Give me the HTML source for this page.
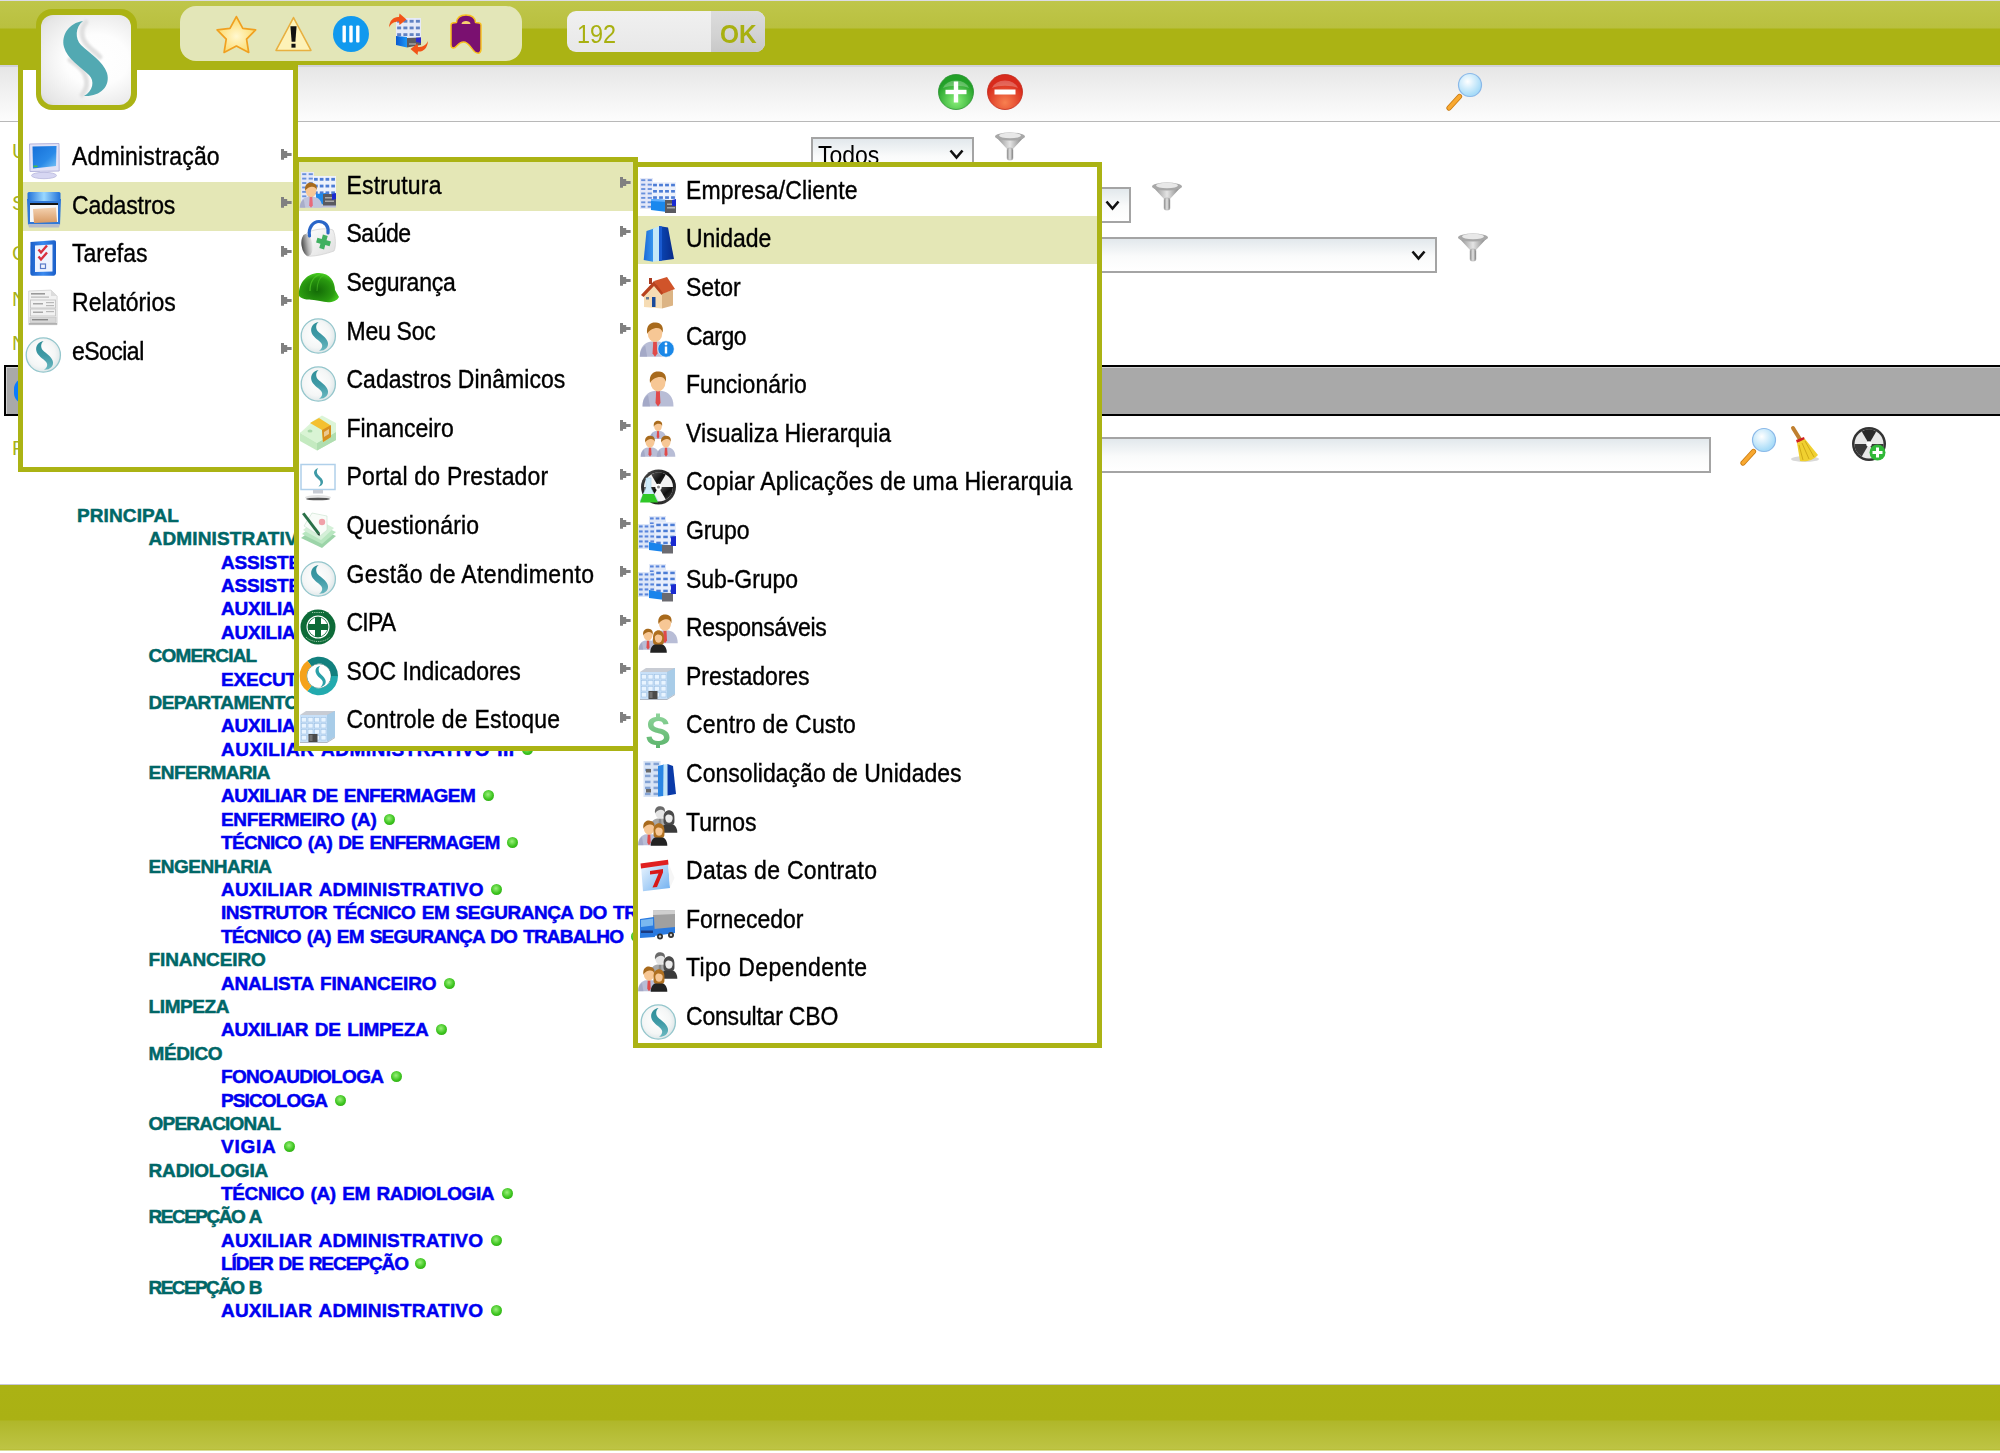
<!DOCTYPE html>
<html><head><meta charset="utf-8">
<style>
html,body{margin:0;padding:0}
body{width:2000px;height:1453px;position:relative;overflow:hidden;background:#fff;font-family:"Liberation Sans",sans-serif}
.a{position:absolute}
#hdr{left:0;top:0;width:2000px;height:65px;background:linear-gradient(#dcdce6 0,#dcdce6 1px,#bfc64a 1px,#b9c03f 28px,#abb314 29px,#abb314 65px)}
#sub{left:0;top:65px;width:2000px;height:55.5px;background:linear-gradient(#d2d2da 0,#d2d2da 1.5px,#e6e6e6 2.5px,#efefef 22px,#fcfcfc 54px);border-bottom:1.5px solid #b8b8b8}
#ftr{left:0;top:1384px;width:2000px;height:69px;background:linear-gradient(#c8c8d8 0,#c8c8d8 1px,#abb214 1px,#aab114 36px,#b0b72a 37px,#bec444 65px,#b4bb2e 66px,#fff 67px)}
.lbl{font-size:20px;line-height:20px;color:#a9b118;left:12px}
.sel{border:2px solid #a4a4a4;background:linear-gradient(#e2e8ec,#fafbfb 55%,#fff);box-sizing:border-box}
#bar{left:4px;top:365px;width:1996px;height:51px;box-sizing:border-box;border:2px solid #000;border-right:none;background:#a9a9a9;box-shadow:inset 1px 1px 0 #d0d0d0}
.menu{position:absolute;border:5px solid #abb314;background:#fff;box-sizing:border-box}
.mi{position:absolute;left:0;right:0;height:48.6px;font-size:23px;line-height:48.6px;color:#000;white-space:nowrap}
.mi.hl{background:#e4e7b6}
.mi .t{position:absolute;top:-0.3px;-webkit-text-stroke:0.35px #000;display:inline-block;transform:scaleY(1.1);transform-origin:0 32px}
.arr{position:absolute;width:11px;height:11px;top:15.4px}
.tr{position:absolute;font-size:19px;line-height:23.39px;font-weight:bold;white-space:nowrap;-webkit-text-stroke:0.5px currentColor;word-spacing:1.6px}
.dot{display:inline-block;width:11px;height:11px;border-radius:50%;background:radial-gradient(circle at 45% 40%,#9af07a,#3cc41e 55%,#2a9a10);margin-left:7.5px;vertical-align:1px;letter-spacing:0}

</style></head><body>
<div id="hdr" class="a"></div>
<div id="sub" class="a"></div>

<div class="a lbl" style="top:141px">U</div>
<div class="a lbl" style="top:193px">S</div>
<div class="a lbl" style="top:242.5px">C</div>
<div class="a lbl" style="top:289px">N</div>
<div class="a lbl" style="top:333px">N</div>
<div class="a lbl" style="top:438px">F</div>

<div class="a sel" style="left:811px;top:136.5px;width:163px;height:36px"><span class="a" style="left:5px;top:4.5px;font-size:23px;line-height:23px;transform:scaleY(1.1);transform-origin:0 0">Todos</span>
<svg class="a" style="left:136px;top:10.5px;width:15px;height:11px" viewBox="0 0 15 11"><path d="M1.5 1.5L7.5 8.5L13.5 1.5" stroke="#111" stroke-width="2.6" fill="none"/></svg></div>
<div class="a sel" style="left:700px;top:187px;width:430.5px;height:36px"><svg class="a" style="left:403px;top:10.5px;width:15px;height:11px" viewBox="0 0 15 11"><path d="M1.5 1.5L7.5 8.5L13.5 1.5" stroke="#111" stroke-width="2.6" fill="none"/></svg></div>
<div class="a sel" style="left:700px;top:237.3px;width:736.5px;height:36.2px"><svg class="a" style="left:709px;top:10.5px;width:15px;height:11px" viewBox="0 0 15 11"><path d="M1.5 1.5L7.5 8.5L13.5 1.5" stroke="#111" stroke-width="2.6" fill="none"/></svg></div>
<svg class="a" style="left:994.0px;top:129.5px;width:36px;height:36px;overflow:visible" viewBox="0 0 36 36"><defs><linearGradient id="fn" x1="0" y1="0" x2="1" y2="0"><stop offset="0" stop-color="#8a8a8a"/><stop offset="0.5" stop-color="#e4e4e4"/><stop offset="1" stop-color="#7a7a7a"/></linearGradient></defs><path d="M2,7 L13,19 L19,19 L30,7 C24,10 8,10 2,7Z" fill="url(#fn)"/><ellipse cx="16" cy="6.5" rx="15" ry="4" fill="#a8a8a8"/><ellipse cx="16" cy="5.5" rx="11" ry="2.8" fill="#e8e8e8"/><rect x="13" y="18" width="6" height="12" rx="2" fill="url(#fn)" stroke="#aaa" stroke-width="0.5"/></svg>
<svg class="a" style="left:1151.0px;top:180.0px;width:36px;height:36px;overflow:visible" viewBox="0 0 36 36"><defs><linearGradient id="fn" x1="0" y1="0" x2="1" y2="0"><stop offset="0" stop-color="#8a8a8a"/><stop offset="0.5" stop-color="#e4e4e4"/><stop offset="1" stop-color="#7a7a7a"/></linearGradient></defs><path d="M2,7 L13,19 L19,19 L30,7 C24,10 8,10 2,7Z" fill="url(#fn)"/><ellipse cx="16" cy="6.5" rx="15" ry="4" fill="#a8a8a8"/><ellipse cx="16" cy="5.5" rx="11" ry="2.8" fill="#e8e8e8"/><rect x="13" y="18" width="6" height="12" rx="2" fill="url(#fn)" stroke="#aaa" stroke-width="0.5"/></svg>
<svg class="a" style="left:1457.0px;top:230.5px;width:36px;height:36px;overflow:visible" viewBox="0 0 36 36"><defs><linearGradient id="fn" x1="0" y1="0" x2="1" y2="0"><stop offset="0" stop-color="#8a8a8a"/><stop offset="0.5" stop-color="#e4e4e4"/><stop offset="1" stop-color="#7a7a7a"/></linearGradient></defs><path d="M2,7 L13,19 L19,19 L30,7 C24,10 8,10 2,7Z" fill="url(#fn)"/><ellipse cx="16" cy="6.5" rx="15" ry="4" fill="#a8a8a8"/><ellipse cx="16" cy="5.5" rx="11" ry="2.8" fill="#e8e8e8"/><rect x="13" y="18" width="6" height="12" rx="2" fill="url(#fn)" stroke="#aaa" stroke-width="0.5"/></svg>
<div id="bar" class="a"><div class="a" style="left:8px;top:10.5px;width:24px;height:26px;border-radius:11px;background:#0a7cff"></div></div>
<div class="a sel" style="left:700px;top:437px;width:1011px;height:36px"></div>
<svg class="a" style="left:1739.5px;top:426.5px;width:36px;height:36px;overflow:visible" viewBox="0 0 36 36"><defs><radialGradient id="mg" cx="0.4" cy="0.35" r="0.6"><stop offset="0" stop-color="#ffffff"/><stop offset="1" stop-color="#a8dcf8"/></radialGradient></defs><path d="M3,36 L13.5,24.5" stroke="#c87a10" stroke-width="5.2" stroke-linecap="round"/><path d="M3,36 L13.5,24.5" stroke="#f8a830" stroke-width="3.6" stroke-linecap="round"/><circle cx="24" cy="13" r="11.5" fill="url(#mg)" stroke="#8ab8e8" stroke-width="1.2"/></svg>
<svg class="a" style="left:1787.0px;top:427.0px;width:36px;height:36px;overflow:visible" viewBox="0 0 36 36"><path d="M6,1 L14,14" stroke="#c08030" stroke-width="4" stroke-linecap="round"/><path d="M9,13 L17,10 L18,13 L10,16Z" fill="#d02020"/><ellipse cx="18" cy="32" rx="14" ry="3" fill="#000" opacity="0.15"/><path d="M10,16 L18,12 L31,28 C26,34 18,35 13,34Z" fill="#f0d030"/><path d="M12,18 L16,33 M15,16 L22,32 M18,14 L27,30" stroke="#c8a010" stroke-width="0.8"/></svg>
<svg class="a" style="left:1851.0px;top:426.0px;width:36px;height:36px;overflow:visible" viewBox="0 0 36 36"><circle cx="18" cy="18" r="17" fill="#333"/><circle cx="18" cy="18" r="14.5" fill="#e8e8e8"/><path d="M18,18 L10.75,5.4 A14.5,14.5 0 0 1 25.25,5.4Z" fill="#2a2a2a"/><path d="M18,18 L32.5,18 A14.5,14.5 0 0 1 25.25,30.6Z" fill="#3a3a3a"/><path d="M18,18 L10.75,30.6 A14.5,14.5 0 0 1 3.5,18Z" fill="#3a3a3a"/><circle cx="18" cy="18" r="2.8" fill="#fff"/><circle cx="26.5" cy="26.5" r="8" fill="#30b838"/><rect x="25" y="21.5" width="3" height="10" fill="#fff"/><rect x="21.5" y="25" width="10" height="3" fill="#fff"/></svg>
<svg class="a" style="left:938.0px;top:73.5px;width:36px;height:36px;overflow:visible" viewBox="0 0 36 36"><defs><radialGradient id="pl" cx="0.5" cy="0.75" r="0.6"><stop offset="0" stop-color="#8af07a"/><stop offset="1" stop-color="#22a028"/></radialGradient></defs><circle cx="18" cy="18" r="17.5" fill="url(#pl)" stroke="#2a9030" stroke-width="0.8"/><path d="M5,14 A14,12 0 0 1 31,14 C24,11 12,11 5,14Z" fill="#fff" opacity="0.25"/><rect x="15.8" y="7.5" width="4.4" height="21" fill="#fff"/><rect x="7.5" y="15.8" width="21" height="4.4" fill="#fff"/></svg>
<svg class="a" style="left:986.7px;top:73.5px;width:36px;height:36px;overflow:visible" viewBox="0 0 36 36"><defs><radialGradient id="mi" cx="0.5" cy="0.8" r="0.6"><stop offset="0" stop-color="#f88050"/><stop offset="1" stop-color="#d82a1c"/></radialGradient></defs><circle cx="18" cy="18" r="17.5" fill="url(#mi)" stroke="#c02818" stroke-width="0.8"/><path d="M5,14 A14,12 0 0 1 31,14 C24,11 12,11 5,14Z" fill="#fff" opacity="0.25"/><rect x="7.5" y="15.5" width="21" height="5" fill="#fff"/></svg>
<svg class="a" style="left:1446.0px;top:71.5px;width:36px;height:36px;overflow:visible" viewBox="0 0 36 36"><defs><radialGradient id="mg" cx="0.4" cy="0.35" r="0.6"><stop offset="0" stop-color="#ffffff"/><stop offset="1" stop-color="#a8dcf8"/></radialGradient></defs><path d="M3,36 L13.5,24.5" stroke="#c87a10" stroke-width="5.2" stroke-linecap="round"/><path d="M3,36 L13.5,24.5" stroke="#f8a830" stroke-width="3.6" stroke-linecap="round"/><circle cx="24" cy="13" r="11.5" fill="url(#mg)" stroke="#8ab8e8" stroke-width="1.2"/></svg>

<div class="tr" style="top:503.79px;left:76.90px;color:#006767;letter-spacing:0.125px">PRINCIPAL</div>
<div class="tr" style="top:527.18px;left:148.60px;color:#006767;letter-spacing:0.140px">ADMINISTRATIVO</div>
<div class="tr" style="top:550.57px;left:221.00px;color:#0000f0;letter-spacing:-0.200px">ASSISTENTE ADMINISTRATIVO<span class="dot"></span></div>
<div class="tr" style="top:573.96px;left:221.00px;color:#0000f0;letter-spacing:-0.200px">ASSISTENTE DE RH<span class="dot"></span></div>
<div class="tr" style="top:597.35px;left:221.00px;color:#0000f0;letter-spacing:-0.200px">AUXILIAR ADMINISTRATIVO I<span class="dot"></span></div>
<div class="tr" style="top:620.74px;left:221.00px;color:#0000f0;letter-spacing:-0.200px">AUXILIAR DE RH<span class="dot"></span></div>
<div class="tr" style="top:644.13px;left:148.60px;color:#006767;letter-spacing:-0.812px">COMERCIAL</div>
<div class="tr" style="top:667.52px;left:221.00px;color:#0000f0;letter-spacing:-0.200px">EXECUTIVO DE VENDAS<span class="dot"></span></div>
<div class="tr" style="top:690.91px;left:148.60px;color:#006767;letter-spacing:-0.600px">DEPARTAMENTO PESSOAL</div>
<div class="tr" style="top:714.30px;left:221.00px;color:#0000f0;letter-spacing:-0.200px">AUXILIAR ADMINISTRATIVO II<span class="dot"></span></div>
<div class="tr" style="top:737.69px;left:221.00px;color:#0000f0;letter-spacing:0.469px">AUXILIAR ADMINISTRATIVO III<span class="dot"></span></div>
<div class="tr" style="top:761.08px;left:148.60px;color:#006767;letter-spacing:-0.522px">ENFERMARIA</div>
<div class="tr" style="top:784.47px;left:221.00px;color:#0000f0;letter-spacing:-0.590px">AUXILIAR DE ENFERMAGEM<span class="dot"></span></div>
<div class="tr" style="top:807.86px;left:221.00px;color:#0000f0;letter-spacing:-0.323px">ENFERMEIRO (A)<span class="dot"></span></div>
<div class="tr" style="top:831.25px;left:221.00px;color:#0000f0;letter-spacing:-0.700px">TÉCNICO (A) DE ENFERMAGEM<span class="dot"></span></div>
<div class="tr" style="top:854.64px;left:148.60px;color:#006767;letter-spacing:-0.489px">ENGENHARIA</div>
<div class="tr" style="top:878.03px;left:221.00px;color:#0000f0;letter-spacing:0.200px">AUXILIAR ADMINISTRATIVO<span class="dot"></span></div>
<div class="tr" style="top:901.42px;left:221.00px;color:#0000f0;letter-spacing:-0.500px">INSTRUTOR TÉCNICO EM SEGURANÇA DO TRABALHO<span class="dot"></span></div>
<div class="tr" style="top:924.81px;left:221.00px;color:#0000f0;letter-spacing:-0.817px">TÉCNICO (A) EM SEGURANÇA DO TRABALHO<span class="dot"></span></div>
<div class="tr" style="top:948.20px;left:148.60px;color:#006767;letter-spacing:-0.111px">FINANCEIRO</div>
<div class="tr" style="top:971.59px;left:221.00px;color:#0000f0;letter-spacing:-0.200px">ANALISTA FINANCEIRO<span class="dot"></span></div>
<div class="tr" style="top:994.98px;left:148.60px;color:#006767;letter-spacing:-0.417px">LIMPEZA</div>
<div class="tr" style="top:1018.37px;left:221.00px;color:#0000f0;letter-spacing:-0.311px">AUXILIAR DE LIMPEZA<span class="dot"></span></div>
<div class="tr" style="top:1041.76px;left:148.60px;color:#006767;letter-spacing:-0.400px">MÉDICO</div>
<div class="tr" style="top:1065.15px;left:221.00px;color:#0000f0;letter-spacing:-0.667px">FONOAUDIOLOGA<span class="dot"></span></div>
<div class="tr" style="top:1088.54px;left:221.00px;color:#0000f0;letter-spacing:-0.875px">PSICOLOGA<span class="dot"></span></div>
<div class="tr" style="top:1111.93px;left:148.60px;color:#006767;letter-spacing:-0.800px">OPERACIONAL</div>
<div class="tr" style="top:1135.32px;left:221.00px;color:#0000f0;letter-spacing:0.725px">VIGIA<span class="dot"></span></div>
<div class="tr" style="top:1158.71px;left:148.60px;color:#006767;letter-spacing:-0.200px">RADIOLOGIA</div>
<div class="tr" style="top:1182.10px;left:221.00px;color:#0000f0;letter-spacing:-0.367px">TÉCNICO (A) EM RADIOLOGIA<span class="dot"></span></div>
<div class="tr" style="top:1205.49px;left:148.60px;color:#006767;letter-spacing:-1.511px">RECEPÇÃO A</div>
<div class="tr" style="top:1228.88px;left:221.00px;color:#0000f0;letter-spacing:0.177px">AUXILIAR ADMINISTRATIVO<span class="dot"></span></div>
<div class="tr" style="top:1252.27px;left:221.00px;color:#0000f0;letter-spacing:-1.050px">LÍDER DE RECEPÇÃO<span class="dot"></span></div>
<div class="tr" style="top:1275.66px;left:148.60px;color:#006767;letter-spacing:-1.589px">RECEPÇÃO B</div>
<div class="tr" style="top:1299.05px;left:221.00px;color:#0000f0;letter-spacing:0.177px">AUXILIAR ADMINISTRATIVO<span class="dot"></span></div>

<div id="ftr" class="a"></div>

<!-- toolbar -->
<div class="a" style="left:180px;top:6px;width:341.5px;height:55px;border-radius:16px;background:#e3e6b8"></div>
<svg class="a" style="left:215px;top:15px;width:38.5px;height:38.5px;overflow:visible" viewBox="0 0 36 36"><defs><radialGradient id="star" cx="0.5" cy="0.55" r="0.5"><stop offset="0" stop-color="#fff8d0"/><stop offset="1" stop-color="#fcdc70"/></radialGradient></defs><path d="M20,1.5 L26,12.5 L38,14 L29.5,22.5 L31.5,35 L20,29 L8.5,35 L10.5,22.5 L2,14 L14,12.5Z" fill="url(#star)" stroke="#f0a020" stroke-width="1.6" stroke-linejoin="round"/></svg>
<svg class="a" style="left:274.5px;top:16px;width:37px;height:37px;overflow:visible" viewBox="0 0 36 36"><path d="M18,1.5 L35,33.5 L1,33.5Z" fill="#fdf2b8" stroke="#e8b040" stroke-width="1.5" stroke-linejoin="round"/><path d="M15,10 L21,10 L19.8,25 L16.2,25Z" fill="#111"/><rect x="16" y="27" width="4" height="3.8" fill="#111"/></svg>
<svg class="a" style="left:333.0px;top:16.0px;width:36px;height:36px;overflow:visible" viewBox="0 0 36 36"><circle cx="18" cy="18" r="18" fill="#1199ee"/><rect x="9.5" y="9.5" width="3.4" height="17" rx="1" fill="#fff"/><rect x="16.3" y="9.5" width="3.4" height="17" rx="1" fill="#fff"/><rect x="23.1" y="9.5" width="3.4" height="17" rx="1" fill="#fff"/></svg>
<svg class="a" style="left:384px;top:10px;width:50px;height:50px;overflow:visible" viewBox="0 0 50 50"><defs><linearGradient id="ba1" x1="0" y1="0" x2="1" y2="0"><stop offset="0" stop-color="#0a5ad0"/><stop offset="1" stop-color="#1a98f8"/></linearGradient></defs><rect x="12" y="8" width="25" height="20" fill="#e6eaf8"/><rect x="13.12" y="9.87" width="4.00" height="2.80" fill="#5a7cc0" opacity="0.95"/><rect x="19.38" y="9.87" width="4.00" height="2.80" fill="#5a7cc0" opacity="0.95"/><rect x="25.62" y="9.87" width="4.00" height="2.80" fill="#5a7cc0" opacity="0.95"/><rect x="31.88" y="9.87" width="4.00" height="2.80" fill="#5a7cc0" opacity="0.95"/><rect x="13.12" y="16.53" width="4.00" height="2.80" fill="#5a7cc0" opacity="0.95"/><rect x="19.38" y="16.53" width="4.00" height="2.80" fill="#5a7cc0" opacity="0.95"/><rect x="25.62" y="16.53" width="4.00" height="2.80" fill="#5a7cc0" opacity="0.95"/><rect x="31.88" y="16.53" width="4.00" height="2.80" fill="#5a7cc0" opacity="0.95"/><rect x="13.12" y="23.20" width="4.00" height="2.80" fill="#5a7cc0" opacity="0.95"/><rect x="19.38" y="23.20" width="4.00" height="2.80" fill="#5a7cc0" opacity="0.95"/><rect x="25.62" y="23.20" width="4.00" height="2.80" fill="#5a7cc0" opacity="0.95"/><rect x="31.88" y="23.20" width="4.00" height="2.80" fill="#5a7cc0" opacity="0.95"/><path d="M12,26 L23,27 L23,37.5 L12,35Z" fill="url(#ba1)"/><path d="M23,28 L37,27.5 L37,35 L23,37.5Z" fill="#5c5c60"/><path d="M32,27.8 L37,27.5 L37,33 L32,32Z" fill="#2a2ad0"/><rect x="25" y="33" width="7" height="2" fill="#909090"/><path d="M5,17.5 C5.5,10 10,6.5 15,7 L15.5,3.5 L22.5,9.5 L15.5,15 L15,11.5 C10,11.5 7,13.5 5,17.5Z" fill="#f25418"/><path d="M44,31 C43.5,38.5 39,42 34,41.5 L33.5,45 L26.5,39 L33.5,33.5 L34,37 C39,37 42,35 44,31Z" fill="#f25418"/></svg>
<svg class="a" style="left:448.0px;top:14.0px;width:36px;height:36px;overflow:visible" viewBox="0 0 36 36"><path d="M3,11 C3,9 5,8.5 8.5,8.5 C9,3 13,1 18,1 C23,1 27,3 27.5,8.5 C31,8.5 33,9 33,11 L33,35 C33,39.5 30,40 27,38 C23,35 21,28 15.5,28 C10,28 8.5,34 5.5,34 C3.5,34 3,33 3,31 Z" fill="#7a1070" stroke="#f8c020" stroke-width="1.5" stroke-linejoin="round"/><path d="M13.5,10 C13.5,6 22.5,6 22.5,10Z" fill="#f8d070"/></svg>

<div class="a" style="left:567px;top:11px;width:198px;height:41px;border-radius:9px;overflow:hidden;background:linear-gradient(#f0f0f0,#e8e8e8)">
<div class="a" style="left:143.7px;top:0;width:54.3px;height:41px;background:linear-gradient(#dcdcdc,#d2d2d2 60%,#c8c8c8)"></div>
<span class="a" style="left:9.5px;top:10px;font-size:26px;line-height:26px;color:#a8b010;transform:scaleX(0.9);transform-origin:0 0">192</span>
<span class="a" style="left:153px;top:10px;font-size:26px;line-height:26px;color:#a8b010;font-weight:bold;transform:scaleX(0.94);transform-origin:0 0">OK</span>
</div>

<!-- MENUS -->
<div id="m1" class="menu" style="left:18px;top:65px;width:280px;height:407px">
<div class="mi" style="top:63.50px"><svg class="a" style="left:2px;top:9.5px;width:36px;height:36px;overflow:visible" viewBox="0 0 36 36"><defs><linearGradient id="mon" x1="0" y1="0" x2="1" y2="1"><stop offset="0" stop-color="#1670d8"/><stop offset="0.6" stop-color="#2a8ae8"/><stop offset="1" stop-color="#7cc6f6"/></linearGradient></defs><path d="M4.5,1 L34,0.5 L34.2,28 L5,28.5Z" fill="#e2e2f6" stroke="#b4b4dc" stroke-width="1"/><path d="M7.5,3.5 L31.5,3 L31,23 L8,25.5Z" fill="url(#mon)"/><rect x="8.5" y="22.5" width="4" height="1.6" fill="#4ac040"/><path d="M15,28 L23,28 L24,31 L14,31Z" fill="#d0d0ec"/><ellipse cx="19" cy="32.5" rx="12.5" ry="3.2" fill="#d6d6f2" stroke="#b8b8dc" stroke-width="0.8"/></svg><span class="t" style="left:49px;letter-spacing:0.158px">Administração</span><svg class="arr" style="left:257.7px" viewBox="0 0 11 11"><path d="M0 0H3V1.9H6.2V3.9H10.6V6.9H6.2V8.9H3V10.8H0Z" fill="#808080"/></svg></div>
<div class="mi hl" style="top:112.10px"><svg class="a" style="left:2px;top:9.5px;width:36px;height:36px;overflow:visible" viewBox="0 0 36 36"><defs><linearGradient id="cadl" x1="0" y1="0" x2="1" y2="0"><stop offset="0" stop-color="#2070d8"/><stop offset="0.5" stop-color="#9ad8ff"/><stop offset="1" stop-color="#2070d8"/></linearGradient><linearGradient id="cadf" x1="0" y1="0" x2="0" y2="1"><stop offset="0" stop-color="#f4d2b0"/><stop offset="1" stop-color="#d89a64"/></linearGradient></defs><path d="M2,7 L36,7 L35,33 L3,33Z" fill="#2f78d8"/><rect x="2.5" y="0" width="33" height="9" rx="1.5" fill="url(#cadl)"/><rect x="5" y="11" width="28" height="3" fill="#151515"/><rect x="5" y="13" width="28" height="17" fill="#f6f8fa"/><path d="M8,17 L31,15.5 L32,30 L9,31Z" fill="url(#cadf)"/><path d="M3,32 L35,32 L34,35.6 L4,35.6Z" fill="#b4bccc"/></svg><span class="t" style="left:49px;letter-spacing:-0.200px">Cadastros</span><svg class="arr" style="left:257.7px" viewBox="0 0 11 11"><path d="M0 0H3V1.9H6.2V3.9H10.6V6.9H6.2V8.9H3V10.8H0Z" fill="#808080"/></svg></div>
<div class="mi" style="top:160.70px"><svg class="a" style="left:2px;top:9.5px;width:36px;height:36px;overflow:visible" viewBox="0 0 36 36"><defs><linearGradient id="tar" x1="0" y1="0" x2="1" y2="0"><stop offset="0" stop-color="#1a5ec8"/><stop offset="0.5" stop-color="#3a8af0"/><stop offset="1" stop-color="#1a5ec8"/></linearGradient></defs><path d="M5.5,2 L29,0.2 C30.5,0.2 31,1 31,2.5 L31,33 C31,34.5 30,35.5 28.5,35.7 L7.5,35.7 C6,35.7 5.3,34.5 5.3,33Z" fill="url(#tar)"/><path d="M10,5.5 L27.5,4.5 L27.5,31.5 L10,32Z" fill="#eef3ff"/><path d="M13.5,9.5 L16,12.5 L22,5.5" stroke="#d83040" stroke-width="2.4" fill="none"/><path d="M13.5,16.5 L16,19.5 L22,12.5" stroke="#d83040" stroke-width="2.4" fill="none"/><rect x="15.5" y="24" width="5" height="4.5" fill="none" stroke="#5a7ac8" stroke-width="1.2"/></svg><span class="t" style="left:49px;letter-spacing:0.017px">Tarefas</span><svg class="arr" style="left:257.7px" viewBox="0 0 11 11"><path d="M0 0H3V1.9H6.2V3.9H10.6V6.9H6.2V8.9H3V10.8H0Z" fill="#808080"/></svg></div>
<div class="mi" style="top:209.30px"><svg class="a" style="left:2px;top:9.5px;width:36px;height:36px;overflow:visible" viewBox="0 0 36 36"><path d="M3.7,2 L26,1.1 L32.1,7 L32.1,35.7 L3.7,35.7Z" fill="#f2f2f2" stroke="#d0d0d0" stroke-width="0.8"/><path d="M26,1.1 L26,7 L32.1,7Z" fill="#dcdcdc"/><rect x="6" y="4" width="14" height="1.6" fill="#9a9a9a"/><rect x="6" y="7.5" width="18" height="1.2" fill="#b8b8b8"/><rect x="5.5" y="11" width="25" height="8" fill="none" stroke="#c4c4c4" stroke-width="0.9"/><rect x="8" y="14" width="10" height="1.5" fill="#a8a8a8"/><rect x="21" y="13" width="8" height="1.2" fill="#b8b8b8"/><rect x="21" y="16" width="8" height="1.2" fill="#b8b8b8"/><rect x="5.5" y="20" width="25" height="7" fill="none" stroke="#c4c4c4" stroke-width="0.9"/><rect x="8" y="22.5" width="10" height="1.5" fill="#a8a8a8"/><rect x="21" y="22" width="8" height="1.2" fill="#b8b8b8"/><rect x="5" y="28.5" width="26" height="5" fill="#d8d8d8" stroke="#c0c0c0" stroke-width="0.6"/><rect x="7" y="30" width="16" height="1.4" fill="#888"/><rect x="4" y="34" width="28" height="1.7" fill="#b0b0b0"/></svg><span class="t" style="left:49px;letter-spacing:0.022px">Relatórios</span><svg class="arr" style="left:257.7px" viewBox="0 0 11 11"><path d="M0 0H3V1.9H6.2V3.9H10.6V6.9H6.2V8.9H3V10.8H0Z" fill="#808080"/></svg></div>
<div class="mi" style="top:257.90px"><svg class="a" style="left:2px;top:9.5px;width:36px;height:36px;overflow:visible" viewBox="0 0 36 36"><defs><radialGradient id="scg" cx="0.45" cy="0.45" r="0.6"><stop offset="0" stop-color="#ffffff"/><stop offset="0.65" stop-color="#f4f6f6"/><stop offset="1" stop-color="#d8e4e6"/></radialGradient><linearGradient id="ssg" x1="0" y1="0" x2="0" y2="1"><stop offset="0" stop-color="#2f8e98"/><stop offset="0.5" stop-color="#3f9aa6"/><stop offset="1" stop-color="#6ab8c0"/></linearGradient></defs><circle cx="18.3" cy="18" r="17.1" fill="url(#scg)" stroke="#94c6cc" stroke-width="1.3"/><path d="M42,6 C28,8 20,20 23,32 C26,44 40,52 48,60 C54,66 52,76 43,81 C58,82 70,72 66,58 C62,46 48,38 40,30 C34,24 34,12 42,6 Z" fill="url(#ssg)" transform="translate(2.60,1.80) scale(0.3811)"/></svg><span class="t" style="left:49px;letter-spacing:-0.533px">eSocial</span><svg class="arr" style="left:257.7px" viewBox="0 0 11 11"><path d="M0 0H3V1.9H6.2V3.9H10.6V6.9H6.2V8.9H3V10.8H0Z" fill="#808080"/></svg></div>
</div>
<div id="m2" class="menu" style="left:294px;top:157px;width:344px;height:594px">
<div class="mi hl" style="top:0.00px"><svg class="a" style="left:1px;top:10px;width:36px;height:36px;overflow:visible" viewBox="0 0 36 36"><rect x="1" y="0" width="13" height="31" fill="#e4e8f8"/><rect x="2.17" y="1.24" width="4.16" height="1.86" fill="#5a86d8" opacity="0.9"/><rect x="8.67" y="1.24" width="4.16" height="1.86" fill="#5a86d8" opacity="0.9"/><rect x="2.17" y="5.67" width="4.16" height="1.86" fill="#5a86d8" opacity="0.9"/><rect x="8.67" y="5.67" width="4.16" height="1.86" fill="#5a86d8" opacity="0.9"/><rect x="2.17" y="10.10" width="4.16" height="1.86" fill="#5a86d8" opacity="0.9"/><rect x="8.67" y="10.10" width="4.16" height="1.86" fill="#5a86d8" opacity="0.9"/><rect x="2.17" y="14.53" width="4.16" height="1.86" fill="#5a86d8" opacity="0.9"/><rect x="8.67" y="14.53" width="4.16" height="1.86" fill="#5a86d8" opacity="0.9"/><rect x="2.17" y="18.95" width="4.16" height="1.86" fill="#5a86d8" opacity="0.9"/><rect x="8.67" y="18.95" width="4.16" height="1.86" fill="#5a86d8" opacity="0.9"/><rect x="2.17" y="23.38" width="4.16" height="1.86" fill="#5a86d8" opacity="0.9"/><rect x="8.67" y="23.38" width="4.16" height="1.86" fill="#5a86d8" opacity="0.9"/><rect x="2.17" y="27.81" width="4.16" height="1.86" fill="#5a86d8" opacity="0.9"/><rect x="8.67" y="27.81" width="4.16" height="1.86" fill="#5a86d8" opacity="0.9"/><rect x="13" y="4" width="23" height="27" fill="#eef2fc"/><rect x="14.04" y="5.89" width="3.68" height="2.83" fill="#3a6fd0" opacity="0.9"/><rect x="19.79" y="5.89" width="3.68" height="2.83" fill="#3a6fd0" opacity="0.9"/><rect x="25.54" y="5.89" width="3.68" height="2.83" fill="#3a6fd0" opacity="0.9"/><rect x="31.29" y="5.89" width="3.68" height="2.83" fill="#3a6fd0" opacity="0.9"/><rect x="14.04" y="12.64" width="3.68" height="2.83" fill="#3a6fd0" opacity="0.9"/><rect x="19.79" y="12.64" width="3.68" height="2.83" fill="#3a6fd0" opacity="0.9"/><rect x="25.54" y="12.64" width="3.68" height="2.83" fill="#3a6fd0" opacity="0.9"/><rect x="31.29" y="12.64" width="3.68" height="2.83" fill="#3a6fd0" opacity="0.9"/><rect x="14.04" y="19.39" width="3.68" height="2.83" fill="#3a6fd0" opacity="0.9"/><rect x="19.79" y="19.39" width="3.68" height="2.83" fill="#3a6fd0" opacity="0.9"/><rect x="25.54" y="19.39" width="3.68" height="2.83" fill="#3a6fd0" opacity="0.9"/><rect x="31.29" y="19.39" width="3.68" height="2.83" fill="#3a6fd0" opacity="0.9"/><rect x="14.04" y="26.14" width="3.68" height="2.83" fill="#3a6fd0" opacity="0.9"/><rect x="19.79" y="26.14" width="3.68" height="2.83" fill="#3a6fd0" opacity="0.9"/><rect x="25.54" y="26.14" width="3.68" height="2.83" fill="#3a6fd0" opacity="0.9"/><rect x="31.29" y="26.14" width="3.68" height="2.83" fill="#3a6fd0" opacity="0.9"/><path d="M16,22 L26,21 L26,32 L16,33Z" fill="#1e88ea"/><path d="M23,22 L36,22 L36,34 L23,34Z" fill="#5a5a60"/><rect x="25" y="25" width="9" height="1.5" fill="#a8a8a8"/><rect x="25" y="28.5" width="9" height="1.5" fill="#a8a8a8"/><path d="M32,22 L36,21 L36,27 L32,28Z" fill="#1a2ad0"/><rect x="14" y="33.5" width="22" height="2" fill="#b8bcd8"/><g transform="translate(11,11) scale(0.72)"><path d="M-15.5,34.5 C-15.5,24 -10,20 -4,19 L4,19 C10,20 15.5,24 15.5,34.5 Z" fill="#c0c4dc"/><path d="M-15.5,34.5 C-15.5,28 -13,25 -10,23 L-8,34.5Z" fill="#8f96b8" opacity="0.5"/><path d="M-1.8,19 L1.8,19 L2.5,31 L0,34.5 L-2.5,31Z" fill="#e86a7a"/><ellipse cx="0" cy="10.5" rx="7.4" ry="9" fill="#f7c795"/><path d="M-8,11 C-9.5,1 -3,-1 1,-0.5 C6,0 9,3 7.8,10 C6.5,5 3,4.5 -1,5.5 C-4,6.5 -6.5,8 -8,11Z" fill="#a86a1c"/></g></svg><span class="t" style="left:47.5px;letter-spacing:0.213px">Estrutura</span><svg class="arr" style="left:321.4px" viewBox="0 0 11 11"><path d="M0 0H3V1.9H6.2V3.9H10.6V6.9H6.2V8.9H3V10.8H0Z" fill="#808080"/></svg></div>
<div class="mi" style="top:48.60px"><svg class="a" style="left:1px;top:10px;width:36px;height:36px;overflow:visible" viewBox="0 0 36 36"><defs><linearGradient id="sbag" x1="0" y1="0" x2="1" y2="1"><stop offset="0" stop-color="#ffffff"/><stop offset="1" stop-color="#dedede"/></linearGradient><linearGradient id="send" x1="0" y1="0" x2="1" y2="0"><stop offset="0" stop-color="#4a4a4a"/><stop offset="0.6" stop-color="#b8b8b8"/><stop offset="1" stop-color="#e8e8e8"/></linearGradient></defs><path d="M6,13 C9,9 26,6 33,9 C36,15 36,27 34,30 C26,33 13,36 7,35 C3,30 2,18 6,13Z" fill="url(#sbag)" stroke="#cfcfcf" stroke-width="0.7"/><ellipse cx="7" cy="24" rx="5.5" ry="11" fill="url(#send)" transform="rotate(-8 7 24)"/><path d="M9.5,15 C8,7 13,0.5 19,0.5 C25,0.5 29,5 28,12" stroke="#2a66c8" stroke-width="3.2" fill="none" stroke-linecap="round"/><path d="M21,14 h5 v4.5 h4.5 v5 h-4.5 v4.5 h-5 v-4.5 h-4.5 v-5 h4.5z" fill="#40b060" transform="rotate(15 23.5 21)"/></svg><span class="t" style="left:47.5px;letter-spacing:-0.500px">Saúde</span><svg class="arr" style="left:321.4px" viewBox="0 0 11 11"><path d="M0 0H3V1.9H6.2V3.9H10.6V6.9H6.2V8.9H3V10.8H0Z" fill="#808080"/></svg></div>
<div class="mi" style="top:97.20px"><svg class="a" style="left:1px;top:10px;width:36px;height:36px;overflow:visible" viewBox="0 0 36 36"><defs><radialGradient id="hat" cx="0.45" cy="0.6" r="0.6"><stop offset="0" stop-color="#126a06"/><stop offset="0.7" stop-color="#2a9a10"/><stop offset="1" stop-color="#48d020"/></radialGradient></defs><path d="M-1,27 C-2,14 7,4 19,4 C30,4 35,13 35,21 L39,28 C36,34 27,34 20,32 C12,30 3,32 -1,27Z" fill="url(#hat)"/><path d="M10,22 C10,13 14,7 20,5.5" stroke="#50c828" stroke-width="1.3" fill="none" opacity="0.7"/><path d="M17,22 C17,14 20,8 24,6" stroke="#50c828" stroke-width="1.1" fill="none" opacity="0.5"/></svg><span class="t" style="left:47.5px;letter-spacing:-0.250px">Segurança</span><svg class="arr" style="left:321.4px" viewBox="0 0 11 11"><path d="M0 0H3V1.9H6.2V3.9H10.6V6.9H6.2V8.9H3V10.8H0Z" fill="#808080"/></svg></div>
<div class="mi" style="top:145.80px"><svg class="a" style="left:1px;top:10px;width:36px;height:36px;overflow:visible" viewBox="0 0 36 36"><defs><radialGradient id="scg" cx="0.45" cy="0.45" r="0.6"><stop offset="0" stop-color="#ffffff"/><stop offset="0.65" stop-color="#f4f6f6"/><stop offset="1" stop-color="#d8e4e6"/></radialGradient><linearGradient id="ssg" x1="0" y1="0" x2="0" y2="1"><stop offset="0" stop-color="#2f8e98"/><stop offset="0.5" stop-color="#3f9aa6"/><stop offset="1" stop-color="#6ab8c0"/></linearGradient></defs><circle cx="18.3" cy="18" r="17.1" fill="url(#scg)" stroke="#94c6cc" stroke-width="1.3"/><path d="M42,6 C28,8 20,20 23,32 C26,44 40,52 48,60 C54,66 52,76 43,81 C58,82 70,72 66,58 C62,46 48,38 40,30 C34,24 34,12 42,6 Z" fill="url(#ssg)" transform="translate(2.60,1.80) scale(0.3811)"/></svg><span class="t" style="left:47.5px;letter-spacing:-0.267px">Meu Soc</span><svg class="arr" style="left:321.4px" viewBox="0 0 11 11"><path d="M0 0H3V1.9H6.2V3.9H10.6V6.9H6.2V8.9H3V10.8H0Z" fill="#808080"/></svg></div>
<div class="mi" style="top:194.40px"><svg class="a" style="left:1px;top:10px;width:36px;height:36px;overflow:visible" viewBox="0 0 36 36"><defs><radialGradient id="scg" cx="0.45" cy="0.45" r="0.6"><stop offset="0" stop-color="#ffffff"/><stop offset="0.65" stop-color="#f4f6f6"/><stop offset="1" stop-color="#d8e4e6"/></radialGradient><linearGradient id="ssg" x1="0" y1="0" x2="0" y2="1"><stop offset="0" stop-color="#2f8e98"/><stop offset="0.5" stop-color="#3f9aa6"/><stop offset="1" stop-color="#6ab8c0"/></linearGradient></defs><circle cx="18.3" cy="18" r="17.1" fill="url(#scg)" stroke="#94c6cc" stroke-width="1.3"/><path d="M42,6 C28,8 20,20 23,32 C26,44 40,52 48,60 C54,66 52,76 43,81 C58,82 70,72 66,58 C62,46 48,38 40,30 C34,24 34,12 42,6 Z" fill="url(#ssg)" transform="translate(2.60,1.80) scale(0.3811)"/></svg><span class="t" style="left:47.5px;letter-spacing:0.006px">Cadastros Dinâmicos</span></div>
<div class="mi" style="top:243.00px"><svg class="a" style="left:1px;top:10px;width:36px;height:36px;overflow:visible" viewBox="0 0 36 36"><path d="M0,18 L13,10 L36,17 L36,25 L17,35.5 L0,26Z" fill="#c4eac0"/><path d="M0,18 L13,10 L36,17 L17,28Z" fill="#dcf6d8"/><path d="M17,28 L36,17 L36,25 L17,35.5Z" fill="#b0deb0"/><path d="M13,6 L22,0.5 L36,8 L36,17 L17,28 L0,18Z" fill="#d8f4d4" opacity="0.9"/><ellipse cx="10" cy="16" rx="2.5" ry="1.5" fill="#a8d8a8"/><path d="M10,8 L19,3 L30,10 L31,22 L23,27 L22,15Z" fill="#f4c030"/><path d="M22,15 L31,10 L31,22 L23,27Z" fill="#d89020"/><path d="M24,17 L29,14 L29,19 L24,22Z" fill="#fff" opacity="0.5"/></svg><span class="t" style="left:47.5px;letter-spacing:-0.022px">Financeiro</span><svg class="arr" style="left:321.4px" viewBox="0 0 11 11"><path d="M0 0H3V1.9H6.2V3.9H10.6V6.9H6.2V8.9H3V10.8H0Z" fill="#808080"/></svg></div>
<div class="mi" style="top:291.60px"><svg class="a" style="left:1px;top:10px;width:36px;height:36px;overflow:visible" viewBox="0 0 36 36"><rect x="1" y="0.5" width="34" height="25" fill="#ffffff" stroke="#b0d0ea" stroke-width="1.5"/><path d="M46,5 C32,8 26,18 29,30 C32,42 44,50 52,58 C58,65 57,76 47,84 C62,82 70,70 65,57 C61,46 50,40 44,32 C39,25 38,12 46,5 Z" fill="#3f9aa6" transform="translate(7.50,3.00) scale(0.2333)"/><rect x="13" y="26" width="10" height="3.5" fill="#c8ccd4"/><ellipse cx="18" cy="33.5" rx="13" ry="2.5" fill="#e4e4e4"/><ellipse cx="18" cy="35" rx="12" ry="1.3" fill="#555"/></svg><span class="t" style="left:47.5px;letter-spacing:0.200px">Portal do Prestador</span><svg class="arr" style="left:321.4px" viewBox="0 0 11 11"><path d="M0 0H3V1.9H6.2V3.9H10.6V6.9H6.2V8.9H3V10.8H0Z" fill="#808080"/></svg></div>
<div class="mi" style="top:340.20px"><svg class="a" style="left:1px;top:10px;width:36px;height:36px;overflow:visible" viewBox="0 0 36 36"><path d="M1,26 L22,36 L36,24 L16,15Z" fill="#9cd4a8"/><path d="M2,22 L22,32 L36,20 L16,11Z" fill="#b8e6c0"/><path d="M3,18 L21,28 L34,16 L17,7Z" fill="#d4f0d8"/><path d="M4,14 L20,24 L27,18 L27,4 L12,1Z" fill="#f8fcf8" stroke="#c8e0cc" stroke-width="0.6"/><circle cx="22" cy="10" r="3.2" fill="#f0a0a8"/><path d="M2,2 L4.5,0.5 L20,21 L17.5,22.5Z" fill="#2a7048"/><path d="M17.5,22.5 L20,21 L19.5,24Z" fill="#1a3a28"/></svg><span class="t" style="left:47.5px;letter-spacing:0.200px">Questionário</span><svg class="arr" style="left:321.4px" viewBox="0 0 11 11"><path d="M0 0H3V1.9H6.2V3.9H10.6V6.9H6.2V8.9H3V10.8H0Z" fill="#808080"/></svg></div>
<div class="mi" style="top:388.80px"><svg class="a" style="left:1px;top:10px;width:36px;height:36px;overflow:visible" viewBox="0 0 36 36"><defs><radialGradient id="scg" cx="0.45" cy="0.45" r="0.6"><stop offset="0" stop-color="#ffffff"/><stop offset="0.65" stop-color="#f4f6f6"/><stop offset="1" stop-color="#d8e4e6"/></radialGradient><linearGradient id="ssg" x1="0" y1="0" x2="0" y2="1"><stop offset="0" stop-color="#2f8e98"/><stop offset="0.5" stop-color="#3f9aa6"/><stop offset="1" stop-color="#6ab8c0"/></linearGradient></defs><circle cx="18.3" cy="18" r="17.1" fill="url(#scg)" stroke="#94c6cc" stroke-width="1.3"/><path d="M42,6 C28,8 20,20 23,32 C26,44 40,52 48,60 C54,66 52,76 43,81 C58,82 70,72 66,58 C62,46 48,38 40,30 C34,24 34,12 42,6 Z" fill="url(#ssg)" transform="translate(2.60,1.80) scale(0.3811)"/></svg><span class="t" style="left:47.5px;letter-spacing:0.360px">Gestão de Atendimento</span><svg class="arr" style="left:321.4px" viewBox="0 0 11 11"><path d="M0 0H3V1.9H6.2V3.9H10.6V6.9H6.2V8.9H3V10.8H0Z" fill="#808080"/></svg></div>
<div class="mi" style="top:437.40px"><svg class="a" style="left:1px;top:10px;width:36px;height:36px;overflow:visible" viewBox="0 0 36 36"><circle cx="18" cy="18" r="17.5" fill="#0d6b38"/><circle cx="18" cy="18" r="11.5" fill="#ffffff"/><circle cx="18" cy="18" r="10" fill="none" stroke="#0d6b38" stroke-width="0.8"/><path d="M15,8 h6 v7 h7 v6 h-7 v7 h-6 v-7 h-7 v-6 h7z" fill="#0d6b38"/><path d="M12,3.5 L24,3.5" stroke="#9ac8a8" stroke-width="1" stroke-dasharray="1.2 1"/><path d="M6,28 C11,34 25,34 30,28" stroke="#9ac8a8" stroke-width="1" fill="none" stroke-dasharray="1.2 1"/></svg><span class="t" style="left:47.5px;letter-spacing:-0.800px">CIPA</span><svg class="arr" style="left:321.4px" viewBox="0 0 11 11"><path d="M0 0H3V1.9H6.2V3.9H10.6V6.9H6.2V8.9H3V10.8H0Z" fill="#808080"/></svg></div>
<div class="mi" style="top:486.00px"><svg class="a" style="left:1px;top:10px;width:36px;height:36px;overflow:visible" viewBox="0 0 36 36"><path d="M9.5,5.5 A15.5,15.5 0 0 1 34.5,18" stroke="#12807e" stroke-width="7" fill="none"/><path d="M34.5,18 A15.5,15.5 0 0 1 9.5,30.5" stroke="#22aaae" stroke-width="7" fill="none"/><path d="M9.5,30.5 A15.5,15.5 0 0 1 9.5,5.5" stroke="#f5a21c" stroke-width="7" fill="none"/><circle cx="19" cy="18" r="12" fill="none" stroke="#0e5e5c" stroke-width="0.9" opacity="0.6"/><circle cx="19" cy="18" r="11.5" fill="#fff"/><path d="M46,5 C32,8 26,18 29,30 C32,42 44,50 52,58 C58,65 57,76 47,84 C62,82 70,70 65,57 C61,46 50,40 44,32 C39,25 38,12 46,5 Z" fill="#2aa0a8" transform="translate(8.00,6.50) scale(0.2667)"/></svg><span class="t" style="left:47.5px;letter-spacing:-0.057px">SOC Indicadores</span><svg class="arr" style="left:321.4px" viewBox="0 0 11 11"><path d="M0 0H3V1.9H6.2V3.9H10.6V6.9H6.2V8.9H3V10.8H0Z" fill="#808080"/></svg></div>
<div class="mi" style="top:534.60px"><svg class="a" style="left:1px;top:10px;width:36px;height:36px;overflow:visible" viewBox="0 0 36 36"><path d="M0,8 L6,4 L35,4 L35,8Z" fill="#c8ccd4"/><path d="M0,8 L27,8 L35,4 L35,8Z" fill="#b8bcc6"/><rect x="0" y="8" width="27" height="27" fill="#c8e0f8"/><path d="M27,8 L35,4 L35,30 L27,35Z" fill="#a8cce8"/><rect x="1.5" y="10.5" width="5" height="4.5" fill="#e8f4ff" stroke="#98bce0" stroke-width="0.5"/><rect x="8.0" y="10.5" width="5" height="4.5" fill="#e8f4ff" stroke="#98bce0" stroke-width="0.5"/><rect x="14.5" y="10.5" width="5" height="4.5" fill="#e8f4ff" stroke="#98bce0" stroke-width="0.5"/><rect x="21.0" y="10.5" width="5" height="4.5" fill="#e8f4ff" stroke="#98bce0" stroke-width="0.5"/><rect x="1.5" y="16.5" width="5" height="4.5" fill="#e8f4ff" stroke="#98bce0" stroke-width="0.5"/><rect x="8.0" y="16.5" width="5" height="4.5" fill="#e8f4ff" stroke="#98bce0" stroke-width="0.5"/><rect x="14.5" y="16.5" width="5" height="4.5" fill="#e8f4ff" stroke="#98bce0" stroke-width="0.5"/><rect x="21.0" y="16.5" width="5" height="4.5" fill="#e8f4ff" stroke="#98bce0" stroke-width="0.5"/><rect x="1.5" y="22.5" width="5" height="4.5" fill="#e8f4ff" stroke="#98bce0" stroke-width="0.5"/><rect x="8.0" y="22.5" width="5" height="4.5" fill="#e8f4ff" stroke="#98bce0" stroke-width="0.5"/><rect x="14.5" y="22.5" width="5" height="4.5" fill="#e8f4ff" stroke="#98bce0" stroke-width="0.5"/><rect x="21.0" y="22.5" width="5" height="4.5" fill="#e8f4ff" stroke="#98bce0" stroke-width="0.5"/><rect x="1.5" y="28.5" width="5" height="4.5" fill="#e8f4ff" stroke="#98bce0" stroke-width="0.5"/><rect x="8.0" y="28.5" width="5" height="4.5" fill="#e8f4ff" stroke="#98bce0" stroke-width="0.5"/><rect x="14.5" y="28.5" width="5" height="4.5" fill="#e8f4ff" stroke="#98bce0" stroke-width="0.5"/><rect x="21.0" y="28.5" width="5" height="4.5" fill="#e8f4ff" stroke="#98bce0" stroke-width="0.5"/><rect x="8.5" y="27" width="9" height="8" fill="#4a4a4a"/><rect x="9.5" y="28" width="3" height="6" fill="#707070"/><path d="M0,35 L27,35 L35,30 L35,31 L27,36 L0,36Z" fill="#b0b8c4"/></svg><span class="t" style="left:47.5px;letter-spacing:0.217px">Controle de Estoque</span><svg class="arr" style="left:321.4px" viewBox="0 0 11 11"><path d="M0 0H3V1.9H6.2V3.9H10.6V6.9H6.2V8.9H3V10.8H0Z" fill="#808080"/></svg></div>
</div>
<div id="m3" class="menu" style="left:633px;top:162px;width:469px;height:886px">
<div class="mi" style="top:0.00px"><svg class="a" style="left:2px;top:10.5px;width:36px;height:36px;overflow:visible" viewBox="0 0 36 36"><rect x="0" y="0" width="13" height="31" fill="#e4e8f8"/><rect x="1.17" y="1.24" width="4.16" height="1.86" fill="#5a86d8" opacity="0.9"/><rect x="7.67" y="1.24" width="4.16" height="1.86" fill="#5a86d8" opacity="0.9"/><rect x="1.17" y="5.67" width="4.16" height="1.86" fill="#5a86d8" opacity="0.9"/><rect x="7.67" y="5.67" width="4.16" height="1.86" fill="#5a86d8" opacity="0.9"/><rect x="1.17" y="10.10" width="4.16" height="1.86" fill="#5a86d8" opacity="0.9"/><rect x="7.67" y="10.10" width="4.16" height="1.86" fill="#5a86d8" opacity="0.9"/><rect x="1.17" y="14.53" width="4.16" height="1.86" fill="#5a86d8" opacity="0.9"/><rect x="7.67" y="14.53" width="4.16" height="1.86" fill="#5a86d8" opacity="0.9"/><rect x="1.17" y="18.95" width="4.16" height="1.86" fill="#5a86d8" opacity="0.9"/><rect x="7.67" y="18.95" width="4.16" height="1.86" fill="#5a86d8" opacity="0.9"/><rect x="1.17" y="23.38" width="4.16" height="1.86" fill="#5a86d8" opacity="0.9"/><rect x="7.67" y="23.38" width="4.16" height="1.86" fill="#5a86d8" opacity="0.9"/><rect x="1.17" y="27.81" width="4.16" height="1.86" fill="#5a86d8" opacity="0.9"/><rect x="7.67" y="27.81" width="4.16" height="1.86" fill="#5a86d8" opacity="0.9"/><rect x="12" y="4" width="24" height="25" fill="#eef2fc"/><rect x="13.08" y="5.75" width="3.84" height="2.62" fill="#3a6fd0" opacity="0.9"/><rect x="19.08" y="5.75" width="3.84" height="2.62" fill="#3a6fd0" opacity="0.9"/><rect x="25.08" y="5.75" width="3.84" height="2.62" fill="#3a6fd0" opacity="0.9"/><rect x="31.08" y="5.75" width="3.84" height="2.62" fill="#3a6fd0" opacity="0.9"/><rect x="13.08" y="12.00" width="3.84" height="2.62" fill="#3a6fd0" opacity="0.9"/><rect x="19.08" y="12.00" width="3.84" height="2.62" fill="#3a6fd0" opacity="0.9"/><rect x="25.08" y="12.00" width="3.84" height="2.62" fill="#3a6fd0" opacity="0.9"/><rect x="31.08" y="12.00" width="3.84" height="2.62" fill="#3a6fd0" opacity="0.9"/><rect x="13.08" y="18.25" width="3.84" height="2.62" fill="#3a6fd0" opacity="0.9"/><rect x="19.08" y="18.25" width="3.84" height="2.62" fill="#3a6fd0" opacity="0.9"/><rect x="25.08" y="18.25" width="3.84" height="2.62" fill="#3a6fd0" opacity="0.9"/><rect x="31.08" y="18.25" width="3.84" height="2.62" fill="#3a6fd0" opacity="0.9"/><rect x="13.08" y="24.50" width="3.84" height="2.62" fill="#3a6fd0" opacity="0.9"/><rect x="19.08" y="24.50" width="3.84" height="2.62" fill="#3a6fd0" opacity="0.9"/><rect x="25.08" y="24.50" width="3.84" height="2.62" fill="#3a6fd0" opacity="0.9"/><rect x="31.08" y="24.50" width="3.84" height="2.62" fill="#3a6fd0" opacity="0.9"/><path d="M11,21 L27,22 L27,34 L11,32Z" fill="#1a88ee"/><path d="M11,21 L27,22 L27,24 L11,23Z" fill="#60b0ff"/><path d="M25,22 L36,22 L36,35 L25,35Z" fill="#5a5a60"/><rect x="27" y="25.5" width="8" height="1.5" fill="#a8a8a8"/><rect x="27" y="29" width="8" height="1.5" fill="#a8a8a8"/><path d="M32,22 L36,21 L36,28 L32,28Z" fill="#1a2ad0"/></svg><span class="t" style="left:48px;letter-spacing:0.100px">Empresa/Cliente</span></div>
<div class="mi hl" style="top:48.60px"><svg class="a" style="left:2px;top:10.5px;width:36px;height:36px;overflow:visible" viewBox="0 0 36 36"><defs><linearGradient id="un1" x1="0" y1="0" x2="1" y2="0"><stop offset="0" stop-color="#1a6ad8"/><stop offset="1" stop-color="#3a9af0"/></linearGradient><linearGradient id="un2" x1="0" y1="0" x2="1" y2="0"><stop offset="0" stop-color="#0a48b8"/><stop offset="1" stop-color="#082a88"/></linearGradient></defs><path d="M3.7,34 L6.5,5 L14,2.5 L13,35.7Z" fill="url(#un1)"/><path d="M13,2.5 L20,0 L19,35 L13,35.7Z" fill="#c4e8f8"/><path d="M19,0 L28,1.5 L34,33 L19,35Z" fill="url(#un2)"/><path d="M19,0 L22,0.5 L22,34.5 L19,35Z" fill="#1a5ad0"/></svg><span class="t" style="left:48px;letter-spacing:-0.067px">Unidade</span></div>
<div class="mi" style="top:97.20px"><svg class="a" style="left:2px;top:10.5px;width:36px;height:36px;overflow:visible" viewBox="0 0 36 36"><path d="M4,19 L14,10 L22,18 L22,33.6 L4,32Z" fill="#f6dcb4"/><path d="M22,18 L33,15 L33,30.5 L22,33.6Z" fill="#dcb484"/><path d="M14,6 L27,2.1 L35,14 L22,19Z" fill="#d0542a"/><path d="M1,20 L14,6 L23,18 L21.5,20 L14,11 L3.5,22Z" fill="#b8421e"/><rect x="9" y="3" width="3" height="6" fill="#a83a20"/><rect x="12" y="22" width="3.5" height="10" fill="#1a4a9a"/><rect x="6" y="22" width="3" height="2.5" fill="#6a7a90"/></svg><span class="t" style="left:48px;letter-spacing:-0.075px">Setor</span></div>
<div class="mi" style="top:145.80px"><svg class="a" style="left:2px;top:10.5px;width:36px;height:36px;overflow:visible" viewBox="0 0 36 36"><g transform="translate(15,0) scale(0.98)"><path d="M-15.5,34.5 C-15.5,24 -10,20 -4,19 L4,19 C10,20 15.5,24 15.5,34.5 Z" fill="#b8bdd6"/><path d="M-15.5,34.5 C-15.5,28 -13,25 -10,23 L-8,34.5Z" fill="#8f96b8" opacity="0.5"/><path d="M-1.8,19 L1.8,19 L2.5,31 L0,34.5 L-2.5,31Z" fill="#e04a4a"/><ellipse cx="0" cy="10.5" rx="7.4" ry="9" fill="#f7c795"/><path d="M-8,11 C-9.5,1 -3,-1 1,-0.5 C6,0 9,3 7.8,10 C6.5,5 3,4.5 -1,5.5 C-4,6.5 -6.5,8 -8,11Z" fill="#a86a1c"/></g><circle cx="26" cy="26" r="8.2" fill="#1a88e8" stroke="#ffffff" stroke-width="0.6"/><rect x="24.8" y="23.5" width="2.4" height="7" fill="#fff"/><circle cx="26" cy="21" r="1.4" fill="#fff"/></svg><span class="t" style="left:48px;letter-spacing:-0.525px">Cargo</span></div>
<div class="mi" style="top:194.40px"><svg class="a" style="left:2px;top:10.5px;width:36px;height:36px;overflow:visible" viewBox="0 0 36 36"><g transform="translate(18,0) scale(1.0)"><path d="M-15.5,34.5 C-15.5,24 -10,20 -4,19 L4,19 C10,20 15.5,24 15.5,34.5 Z" fill="#b8bdd6"/><path d="M-15.5,34.5 C-15.5,28 -13,25 -10,23 L-8,34.5Z" fill="#8f96b8" opacity="0.5"/><path d="M-1.8,19 L1.8,19 L2.5,31 L0,34.5 L-2.5,31Z" fill="#e04a4a"/><ellipse cx="0" cy="10.5" rx="7.4" ry="9" fill="#f7c795"/><path d="M-8,11 C-9.5,1 -3,-1 1,-0.5 C6,0 9,3 7.8,10 C6.5,5 3,4.5 -1,5.5 C-4,6.5 -6.5,8 -8,11Z" fill="#a86a1c"/></g></svg><span class="t" style="left:48px;letter-spacing:0.060px">Funcionário</span></div>
<div class="mi" style="top:243.00px"><svg class="a" style="left:2px;top:10.5px;width:36px;height:36px;overflow:visible" viewBox="0 0 36 36"><g transform="translate(18,0) scale(0.52)"><path d="M-15.5,34.5 C-15.5,24 -10,20 -4,19 L4,19 C10,20 15.5,24 15.5,34.5 Z" fill="#b8bdd6"/><path d="M-15.5,34.5 C-15.5,28 -13,25 -10,23 L-8,34.5Z" fill="#8f96b8" opacity="0.5"/><path d="M-1.8,19 L1.8,19 L2.5,31 L0,34.5 L-2.5,31Z" fill="#e04a4a"/><ellipse cx="0" cy="10.5" rx="7.4" ry="9" fill="#f7c795"/><path d="M-8,11 C-9.5,1 -3,-1 1,-0.5 C6,0 9,3 7.8,10 C6.5,5 3,4.5 -1,5.5 C-4,6.5 -6.5,8 -8,11Z" fill="#a86a1c"/></g><g transform="translate(10,15) scale(0.6)"><path d="M-15.5,34.5 C-15.5,24 -10,20 -4,19 L4,19 C10,20 15.5,24 15.5,34.5 Z" fill="#b8bdd6"/><path d="M-15.5,34.5 C-15.5,28 -13,25 -10,23 L-8,34.5Z" fill="#8f96b8" opacity="0.5"/><path d="M-1.8,19 L1.8,19 L2.5,31 L0,34.5 L-2.5,31Z" fill="#e04a4a"/><ellipse cx="0" cy="10.5" rx="7.4" ry="9" fill="#f7c795"/><path d="M-8,11 C-9.5,1 -3,-1 1,-0.5 C6,0 9,3 7.8,10 C6.5,5 3,4.5 -1,5.5 C-4,6.5 -6.5,8 -8,11Z" fill="#a86a1c"/></g><g transform="translate(26,15) scale(0.6)"><path d="M-15.5,34.5 C-15.5,24 -10,20 -4,19 L4,19 C10,20 15.5,24 15.5,34.5 Z" fill="#b8bdd6"/><path d="M-15.5,34.5 C-15.5,28 -13,25 -10,23 L-8,34.5Z" fill="#8f96b8" opacity="0.5"/><path d="M-1.8,19 L1.8,19 L2.5,31 L0,34.5 L-2.5,31Z" fill="#e04a4a"/><ellipse cx="0" cy="10.5" rx="7.4" ry="9" fill="#f7c795"/><path d="M-8,11 C-9.5,1 -3,-1 1,-0.5 C6,0 9,3 7.8,10 C6.5,5 3,4.5 -1,5.5 C-4,6.5 -6.5,8 -8,11Z" fill="#a86a1c"/></g></svg><span class="t" style="left:48px;letter-spacing:0.053px">Visualiza Hierarquia</span></div>
<div class="mi" style="top:291.60px"><svg class="a" style="left:2px;top:10.5px;width:36px;height:36px;overflow:visible" viewBox="0 0 36 36"><defs><linearGradient id="radg" x1="0" y1="0" x2="1" y2="1"><stop offset="0" stop-color="#555"/><stop offset="0.5" stop-color="#111"/><stop offset="1" stop-color="#444"/></linearGradient></defs><circle cx="18.5" cy="18" r="17.5" fill="url(#radg)"/><circle cx="18.5" cy="18" r="14.5" fill="#f4f4f4"/><path d="M18.5,18 L11.25,5.4 A14.5,14.5 0 0 1 25.75,5.4Z" fill="url(#radg)"/><path d="M18.5,18 L33,18 A14.5,14.5 0 0 1 25.75,30.6Z" fill="url(#radg)"/><path d="M18.5,18 L11.25,30.6 A14.5,14.5 0 0 1 4,18Z" fill="url(#radg)"/><circle cx="18.5" cy="18" r="3.2" fill="#fff"/><circle cx="18.5" cy="18" r="1.5" fill="#888"/><path d="M6,9 L11,9 L11,19 L18,32 L0,32 L6,19Z" fill="#d0ecfa" stroke="#a8d0e8" stroke-width="0.6"/><path d="M3,25 L14,25 L18,33.5 L0,33.5Z" fill="#30c828"/></svg><span class="t" style="left:48px;letter-spacing:0.197px">Copiar Aplicações de uma Hierarquia</span></div>
<div class="mi" style="top:340.20px"><svg class="a" style="left:2px;top:10.5px;width:36px;height:36px;overflow:visible" viewBox="0 0 36 36"><rect x="9" y="-2" width="17" height="20" fill="#e0e8f8"/><rect x="10.02" y="-0.60" width="3.63" height="2.10" fill="#4a7ad8" opacity="0.9"/><rect x="15.69" y="-0.60" width="3.63" height="2.10" fill="#4a7ad8" opacity="0.9"/><rect x="21.35" y="-0.60" width="3.63" height="2.10" fill="#4a7ad8" opacity="0.9"/><rect x="10.02" y="4.40" width="3.63" height="2.10" fill="#4a7ad8" opacity="0.9"/><rect x="15.69" y="4.40" width="3.63" height="2.10" fill="#4a7ad8" opacity="0.9"/><rect x="21.35" y="4.40" width="3.63" height="2.10" fill="#4a7ad8" opacity="0.9"/><rect x="10.02" y="9.40" width="3.63" height="2.10" fill="#4a7ad8" opacity="0.9"/><rect x="15.69" y="9.40" width="3.63" height="2.10" fill="#4a7ad8" opacity="0.9"/><rect x="21.35" y="9.40" width="3.63" height="2.10" fill="#4a7ad8" opacity="0.9"/><rect x="10.02" y="14.40" width="3.63" height="2.10" fill="#4a7ad8" opacity="0.9"/><rect x="15.69" y="14.40" width="3.63" height="2.10" fill="#4a7ad8" opacity="0.9"/><rect x="21.35" y="14.40" width="3.63" height="2.10" fill="#4a7ad8" opacity="0.9"/><rect x="-2" y="6" width="17" height="25" fill="#dce6f8"/><rect x="-0.98" y="7.40" width="3.63" height="2.10" fill="#4a7ad8" opacity="0.9"/><rect x="4.69" y="7.40" width="3.63" height="2.10" fill="#4a7ad8" opacity="0.9"/><rect x="10.35" y="7.40" width="3.63" height="2.10" fill="#4a7ad8" opacity="0.9"/><rect x="-0.98" y="12.40" width="3.63" height="2.10" fill="#4a7ad8" opacity="0.9"/><rect x="4.69" y="12.40" width="3.63" height="2.10" fill="#4a7ad8" opacity="0.9"/><rect x="10.35" y="12.40" width="3.63" height="2.10" fill="#4a7ad8" opacity="0.9"/><rect x="-0.98" y="17.40" width="3.63" height="2.10" fill="#4a7ad8" opacity="0.9"/><rect x="4.69" y="17.40" width="3.63" height="2.10" fill="#4a7ad8" opacity="0.9"/><rect x="10.35" y="17.40" width="3.63" height="2.10" fill="#4a7ad8" opacity="0.9"/><rect x="-0.98" y="22.40" width="3.63" height="2.10" fill="#4a7ad8" opacity="0.9"/><rect x="4.69" y="22.40" width="3.63" height="2.10" fill="#4a7ad8" opacity="0.9"/><rect x="10.35" y="22.40" width="3.63" height="2.10" fill="#4a7ad8" opacity="0.9"/><rect x="-0.98" y="27.40" width="3.63" height="2.10" fill="#4a7ad8" opacity="0.9"/><rect x="4.69" y="27.40" width="3.63" height="2.10" fill="#4a7ad8" opacity="0.9"/><rect x="10.35" y="27.40" width="3.63" height="2.10" fill="#4a7ad8" opacity="0.9"/><rect x="15" y="4" width="21" height="24" fill="#e8eefc"/><rect x="16.26" y="5.68" width="4.48" height="2.52" fill="#3a6fd0" opacity="0.9"/><rect x="23.26" y="5.68" width="4.48" height="2.52" fill="#3a6fd0" opacity="0.9"/><rect x="30.26" y="5.68" width="4.48" height="2.52" fill="#3a6fd0" opacity="0.9"/><rect x="16.26" y="11.68" width="4.48" height="2.52" fill="#3a6fd0" opacity="0.9"/><rect x="23.26" y="11.68" width="4.48" height="2.52" fill="#3a6fd0" opacity="0.9"/><rect x="30.26" y="11.68" width="4.48" height="2.52" fill="#3a6fd0" opacity="0.9"/><rect x="16.26" y="17.68" width="4.48" height="2.52" fill="#3a6fd0" opacity="0.9"/><rect x="23.26" y="17.68" width="4.48" height="2.52" fill="#3a6fd0" opacity="0.9"/><rect x="30.26" y="17.68" width="4.48" height="2.52" fill="#3a6fd0" opacity="0.9"/><rect x="16.26" y="23.68" width="4.48" height="2.52" fill="#3a6fd0" opacity="0.9"/><rect x="23.26" y="23.68" width="4.48" height="2.52" fill="#3a6fd0" opacity="0.9"/><rect x="30.26" y="23.68" width="4.48" height="2.52" fill="#3a6fd0" opacity="0.9"/><path d="M9,24 L25,27 L25,34 L9,32Z" fill="#1a84ec"/><path d="M22,27 L33,27 L33,35.5 L22,35.5Z" fill="#6a6a70"/><path d="M31,19 L36,18 L36,28 L31,28Z" fill="#1a2ad0"/></svg><span class="t" style="left:48px;letter-spacing:-0.125px">Grupo</span></div>
<div class="mi" style="top:388.80px"><svg class="a" style="left:2px;top:10.5px;width:36px;height:36px;overflow:visible" viewBox="0 0 36 36"><rect x="9" y="-2" width="17" height="20" fill="#e0e8f8"/><rect x="10.02" y="-0.60" width="3.63" height="2.10" fill="#4a7ad8" opacity="0.9"/><rect x="15.69" y="-0.60" width="3.63" height="2.10" fill="#4a7ad8" opacity="0.9"/><rect x="21.35" y="-0.60" width="3.63" height="2.10" fill="#4a7ad8" opacity="0.9"/><rect x="10.02" y="4.40" width="3.63" height="2.10" fill="#4a7ad8" opacity="0.9"/><rect x="15.69" y="4.40" width="3.63" height="2.10" fill="#4a7ad8" opacity="0.9"/><rect x="21.35" y="4.40" width="3.63" height="2.10" fill="#4a7ad8" opacity="0.9"/><rect x="10.02" y="9.40" width="3.63" height="2.10" fill="#4a7ad8" opacity="0.9"/><rect x="15.69" y="9.40" width="3.63" height="2.10" fill="#4a7ad8" opacity="0.9"/><rect x="21.35" y="9.40" width="3.63" height="2.10" fill="#4a7ad8" opacity="0.9"/><rect x="10.02" y="14.40" width="3.63" height="2.10" fill="#4a7ad8" opacity="0.9"/><rect x="15.69" y="14.40" width="3.63" height="2.10" fill="#4a7ad8" opacity="0.9"/><rect x="21.35" y="14.40" width="3.63" height="2.10" fill="#4a7ad8" opacity="0.9"/><rect x="-2" y="6" width="17" height="25" fill="#dce6f8"/><rect x="-0.98" y="7.40" width="3.63" height="2.10" fill="#4a7ad8" opacity="0.9"/><rect x="4.69" y="7.40" width="3.63" height="2.10" fill="#4a7ad8" opacity="0.9"/><rect x="10.35" y="7.40" width="3.63" height="2.10" fill="#4a7ad8" opacity="0.9"/><rect x="-0.98" y="12.40" width="3.63" height="2.10" fill="#4a7ad8" opacity="0.9"/><rect x="4.69" y="12.40" width="3.63" height="2.10" fill="#4a7ad8" opacity="0.9"/><rect x="10.35" y="12.40" width="3.63" height="2.10" fill="#4a7ad8" opacity="0.9"/><rect x="-0.98" y="17.40" width="3.63" height="2.10" fill="#4a7ad8" opacity="0.9"/><rect x="4.69" y="17.40" width="3.63" height="2.10" fill="#4a7ad8" opacity="0.9"/><rect x="10.35" y="17.40" width="3.63" height="2.10" fill="#4a7ad8" opacity="0.9"/><rect x="-0.98" y="22.40" width="3.63" height="2.10" fill="#4a7ad8" opacity="0.9"/><rect x="4.69" y="22.40" width="3.63" height="2.10" fill="#4a7ad8" opacity="0.9"/><rect x="10.35" y="22.40" width="3.63" height="2.10" fill="#4a7ad8" opacity="0.9"/><rect x="-0.98" y="27.40" width="3.63" height="2.10" fill="#4a7ad8" opacity="0.9"/><rect x="4.69" y="27.40" width="3.63" height="2.10" fill="#4a7ad8" opacity="0.9"/><rect x="10.35" y="27.40" width="3.63" height="2.10" fill="#4a7ad8" opacity="0.9"/><rect x="15" y="4" width="21" height="24" fill="#e8eefc"/><rect x="16.26" y="5.68" width="4.48" height="2.52" fill="#3a6fd0" opacity="0.9"/><rect x="23.26" y="5.68" width="4.48" height="2.52" fill="#3a6fd0" opacity="0.9"/><rect x="30.26" y="5.68" width="4.48" height="2.52" fill="#3a6fd0" opacity="0.9"/><rect x="16.26" y="11.68" width="4.48" height="2.52" fill="#3a6fd0" opacity="0.9"/><rect x="23.26" y="11.68" width="4.48" height="2.52" fill="#3a6fd0" opacity="0.9"/><rect x="30.26" y="11.68" width="4.48" height="2.52" fill="#3a6fd0" opacity="0.9"/><rect x="16.26" y="17.68" width="4.48" height="2.52" fill="#3a6fd0" opacity="0.9"/><rect x="23.26" y="17.68" width="4.48" height="2.52" fill="#3a6fd0" opacity="0.9"/><rect x="30.26" y="17.68" width="4.48" height="2.52" fill="#3a6fd0" opacity="0.9"/><rect x="16.26" y="23.68" width="4.48" height="2.52" fill="#3a6fd0" opacity="0.9"/><rect x="23.26" y="23.68" width="4.48" height="2.52" fill="#3a6fd0" opacity="0.9"/><rect x="30.26" y="23.68" width="4.48" height="2.52" fill="#3a6fd0" opacity="0.9"/><path d="M9,24 L25,27 L25,34 L9,32Z" fill="#1a84ec"/><path d="M22,27 L33,27 L33,35.5 L22,35.5Z" fill="#6a6a70"/><path d="M31,19 L36,18 L36,28 L31,28Z" fill="#1a2ad0"/></svg><span class="t" style="left:48px;letter-spacing:-0.062px">Sub-Grupo</span></div>
<div class="mi" style="top:437.40px"><svg class="a" style="left:2px;top:10.5px;width:36px;height:36px;overflow:visible" viewBox="0 0 36 36"><g transform="translate(25,0) scale(0.82)"><path d="M-15.5,34.5 C-15.5,24 -10,20 -4,19 L4,19 C10,20 15.5,24 15.5,34.5 Z" fill="#b8bdd6"/><path d="M-15.5,34.5 C-15.5,28 -13,25 -10,23 L-8,34.5Z" fill="#8f96b8" opacity="0.5"/><path d="M-1.8,19 L1.8,19 L2.5,31 L0,34.5 L-2.5,31Z" fill="#e04a4a"/><ellipse cx="0" cy="10.5" rx="7.4" ry="9" fill="#f7c795"/><path d="M-8,11 C-9.5,1 -3,-1 1,-0.5 C6,0 9,3 7.8,10 C6.5,5 3,4.5 -1,5.5 C-4,6.5 -6.5,8 -8,11Z" fill="#a86a1c"/></g><g transform="translate(8,14) scale(0.6)"><path d="M-15.5,34.5 C-15.5,24 -10,20 -4,19 L4,19 C10,20 15.5,24 15.5,34.5 Z" fill="#b8bdd6"/><path d="M-15.5,34.5 C-15.5,28 -13,25 -10,23 L-8,34.5Z" fill="#8f96b8" opacity="0.5"/><path d="M-1.8,19 L1.8,19 L2.5,31 L0,34.5 L-2.5,31Z" fill="#e04a4a"/><ellipse cx="0" cy="10.5" rx="7.4" ry="9" fill="#f7c795"/><path d="M-8,11 C-9.5,1 -3,-1 1,-0.5 C6,0 9,3 7.8,10 C6.5,5 3,4.5 -1,5.5 C-4,6.5 -6.5,8 -8,11Z" fill="#a86a1c"/></g><g transform="translate(18.5,16) scale(0.64)"><path d="M-13,34 C-13,25 -8,21 -3,20 L3,20 C8,21 13,25 13,34 Z" fill="#222"/><path d="M-8.5,12 C-9,2 -4,-1 0,-1 C4,-1 9,2 8.5,12 C8.5,17 9,20 6,21 L-6,21 C-9,20 -8.5,17 -8.5,12Z" fill="#b07020"/><ellipse cx="0" cy="11" rx="5.8" ry="7.5" fill="#f7c795"/><path d="M-6,8 C-5,3 -2,2 1,2.5 C4,3 6,5 6,9 C4,6 1,5 -2,5.5Z" fill="#b07020"/></g></svg><span class="t" style="left:48px;letter-spacing:-0.336px">Responsáveis</span></div>
<div class="mi" style="top:486.00px"><svg class="a" style="left:2px;top:10.5px;width:36px;height:36px;overflow:visible" viewBox="0 0 36 36"><path d="M0,8 L6,4 L35,4 L35,8Z" fill="#c8ccd4"/><path d="M0,8 L27,8 L35,4 L35,8Z" fill="#b8bcc6"/><rect x="0" y="8" width="27" height="27" fill="#c8e0f8"/><path d="M27,8 L35,4 L35,30 L27,35Z" fill="#a8cce8"/><rect x="1.5" y="10.5" width="5" height="4.5" fill="#e8f4ff" stroke="#98bce0" stroke-width="0.5"/><rect x="8.0" y="10.5" width="5" height="4.5" fill="#e8f4ff" stroke="#98bce0" stroke-width="0.5"/><rect x="14.5" y="10.5" width="5" height="4.5" fill="#e8f4ff" stroke="#98bce0" stroke-width="0.5"/><rect x="21.0" y="10.5" width="5" height="4.5" fill="#e8f4ff" stroke="#98bce0" stroke-width="0.5"/><rect x="1.5" y="16.5" width="5" height="4.5" fill="#e8f4ff" stroke="#98bce0" stroke-width="0.5"/><rect x="8.0" y="16.5" width="5" height="4.5" fill="#e8f4ff" stroke="#98bce0" stroke-width="0.5"/><rect x="14.5" y="16.5" width="5" height="4.5" fill="#e8f4ff" stroke="#98bce0" stroke-width="0.5"/><rect x="21.0" y="16.5" width="5" height="4.5" fill="#e8f4ff" stroke="#98bce0" stroke-width="0.5"/><rect x="1.5" y="22.5" width="5" height="4.5" fill="#e8f4ff" stroke="#98bce0" stroke-width="0.5"/><rect x="8.0" y="22.5" width="5" height="4.5" fill="#e8f4ff" stroke="#98bce0" stroke-width="0.5"/><rect x="14.5" y="22.5" width="5" height="4.5" fill="#e8f4ff" stroke="#98bce0" stroke-width="0.5"/><rect x="21.0" y="22.5" width="5" height="4.5" fill="#e8f4ff" stroke="#98bce0" stroke-width="0.5"/><rect x="1.5" y="28.5" width="5" height="4.5" fill="#e8f4ff" stroke="#98bce0" stroke-width="0.5"/><rect x="8.0" y="28.5" width="5" height="4.5" fill="#e8f4ff" stroke="#98bce0" stroke-width="0.5"/><rect x="14.5" y="28.5" width="5" height="4.5" fill="#e8f4ff" stroke="#98bce0" stroke-width="0.5"/><rect x="21.0" y="28.5" width="5" height="4.5" fill="#e8f4ff" stroke="#98bce0" stroke-width="0.5"/><rect x="8.5" y="27" width="9" height="8" fill="#4a4a4a"/><rect x="9.5" y="28" width="3" height="6" fill="#707070"/><path d="M0,35 L27,35 L35,30 L35,31 L27,36 L0,36Z" fill="#b0b8c4"/></svg><span class="t" style="left:48px;letter-spacing:-0.050px">Prestadores</span></div>
<div class="mi" style="top:534.60px"><svg class="a" style="left:2px;top:10.5px;width:36px;height:36px;overflow:visible" viewBox="0 0 36 36"><defs><linearGradient id="dol" x1="0" y1="0" x2="0" y2="1"><stop offset="0" stop-color="#8ed49a"/><stop offset="1" stop-color="#5cb46c"/></linearGradient></defs><path d="M16,1.6 h4 v3.4 C25,5.5 28,8 28.5,12 L23.5,12.5 C23,10 21,9 18.5,9 C15.5,9 13.5,10.5 13.5,12.5 C13.5,15 16,15.5 20,16.5 C26,18 29.5,20.5 29.5,25.5 C29.5,30 26,32.5 20,33 v3 h-4 v-3 C10,32.5 7,29.5 6.5,25 L11.5,24.5 C12,27.5 14.5,29 18,29 C21.5,29 24,27.5 24,25.5 C24,23 22,22 17.5,21 C11.5,19.5 8,17.5 8,12.5 C8,8 11,5.5 16,5Z" fill="url(#dol)"/></svg><span class="t" style="left:48px;letter-spacing:0.171px">Centro de Custo</span></div>
<div class="mi" style="top:583.20px"><svg class="a" style="left:2px;top:10.5px;width:36px;height:36px;overflow:visible" viewBox="0 0 36 36"><rect x="3.5" y="0" width="17" height="36" fill="#d8e4f6"/><rect x="5.03" y="1.68" width="5.44" height="2.52" fill="#7a9ad0" opacity="0.9"/><rect x="13.53" y="1.68" width="5.44" height="2.52" fill="#7a9ad0" opacity="0.9"/><rect x="5.03" y="7.68" width="5.44" height="2.52" fill="#7a9ad0" opacity="0.9"/><rect x="13.53" y="7.68" width="5.44" height="2.52" fill="#7a9ad0" opacity="0.9"/><rect x="5.03" y="13.68" width="5.44" height="2.52" fill="#7a9ad0" opacity="0.9"/><rect x="13.53" y="13.68" width="5.44" height="2.52" fill="#7a9ad0" opacity="0.9"/><rect x="5.03" y="19.68" width="5.44" height="2.52" fill="#7a9ad0" opacity="0.9"/><rect x="13.53" y="19.68" width="5.44" height="2.52" fill="#7a9ad0" opacity="0.9"/><rect x="5.03" y="25.68" width="5.44" height="2.52" fill="#7a9ad0" opacity="0.9"/><rect x="13.53" y="25.68" width="5.44" height="2.52" fill="#7a9ad0" opacity="0.9"/><rect x="5.03" y="31.68" width="5.44" height="2.52" fill="#7a9ad0" opacity="0.9"/><rect x="13.53" y="31.68" width="5.44" height="2.52" fill="#7a9ad0" opacity="0.9"/><rect x="6" y="8" width="5" height="3.5" fill="#6a6a6a"/><rect x="6" y="28" width="5" height="3.5" fill="#6a6a6a"/><path d="M18,5 L24,3.5 L23.5,35 L18,35.5Z" fill="#2a86e4"/><path d="M23.5,3.5 L28,3 L27.5,34.5 L23.5,35Z" fill="#c4e6f8"/><path d="M27.5,3 L33,5 L36,33 L27.5,34.5Z" fill="#0a3aa8"/></svg><span class="t" style="left:48px;letter-spacing:0.030px">Consolidação de Unidades</span></div>
<div class="mi" style="top:631.80px"><svg class="a" style="left:2px;top:10.5px;width:36px;height:36px;overflow:visible" viewBox="0 0 36 36"><g transform="translate(20,-2.4) scale(0.62)"><path d="M-15.5,34.5 C-15.5,24 -10,20 -4,19 L4,19 C10,20 15.5,24 15.5,34.5 Z" fill="#a8a8a8"/><path d="M-15.5,34.5 C-15.5,28 -13,25 -10,23 L-8,34.5Z" fill="#8f96b8" opacity="0.5"/><path d="M-1.8,19 L1.8,19 L2.5,31 L0,34.5 L-2.5,31Z" fill="#888"/><ellipse cx="0" cy="10.5" rx="7.4" ry="9" fill="#e4e4e4"/><path d="M-8,11 C-9.5,1 -3,-1 1,-0.5 C6,0 9,3 7.8,10 C6.5,5 3,4.5 -1,5.5 C-4,6.5 -6.5,8 -8,11Z" fill="#6a6a6a"/></g><g transform="translate(29,2) scale(0.64)"><path d="M-13,34 C-13,25 -8,21 -3,20 L3,20 C8,21 13,25 13,34 Z" fill="#3a3a3a"/><path d="M-8.5,12 C-9,2 -4,-1 0,-1 C4,-1 9,2 8.5,12 C8.5,17 9,20 6,21 L-6,21 C-9,20 -8.5,17 -8.5,12Z" fill="#4a4a4a"/><ellipse cx="0" cy="11" rx="5.8" ry="7.5" fill="#ececec"/><path d="M-6,8 C-5,3 -2,2 1,2.5 C4,3 6,5 6,9 C4,6 1,5 -2,5.5Z" fill="#4a4a4a"/></g><g transform="translate(9,12) scale(0.7)"><path d="M-15.5,34.5 C-15.5,24 -10,20 -4,19 L4,19 C10,20 15.5,24 15.5,34.5 Z" fill="#b8bdd6"/><path d="M-15.5,34.5 C-15.5,28 -13,25 -10,23 L-8,34.5Z" fill="#8f96b8" opacity="0.5"/><path d="M-1.8,19 L1.8,19 L2.5,31 L0,34.5 L-2.5,31Z" fill="#e04a4a"/><ellipse cx="0" cy="10.5" rx="7.4" ry="9" fill="#f7c795"/><path d="M-8,11 C-9.5,1 -3,-1 1,-0.5 C6,0 9,3 7.8,10 C6.5,5 3,4.5 -1,5.5 C-4,6.5 -6.5,8 -8,11Z" fill="#a86a1c"/></g><g transform="translate(19,15) scale(0.64)"><path d="M-13,34 C-13,25 -8,21 -3,20 L3,20 C8,21 13,25 13,34 Z" fill="#222"/><path d="M-8.5,12 C-9,2 -4,-1 0,-1 C4,-1 9,2 8.5,12 C8.5,17 9,20 6,21 L-6,21 C-9,20 -8.5,17 -8.5,12Z" fill="#b07020"/><ellipse cx="0" cy="11" rx="5.8" ry="7.5" fill="#f7c795"/><path d="M-6,8 C-5,3 -2,2 1,2.5 C4,3 6,5 6,9 C4,6 1,5 -2,5.5Z" fill="#b07020"/></g></svg><span class="t" style="left:48px;letter-spacing:-0.040px">Turnos</span></div>
<div class="mi" style="top:680.40px"><svg class="a" style="left:2px;top:10.5px;width:36px;height:36px;overflow:visible" viewBox="0 0 36 36"><defs><linearGradient id="cal" x1="0" y1="0" x2="1" y2="1"><stop offset="0" stop-color="#f0f8ff"/><stop offset="1" stop-color="#70b0f0"/></linearGradient></defs><path d="M1,8 L28,4 L30,30 L3,33.2Z" fill="url(#cal)"/><path d="M28,4 L34.5,20 L30,30Z" fill="#f6f6f6"/><path d="M0.5,5.5 L28,1.7 L28.5,6.5 L1,10.5Z" fill="#e02020"/><path d="M10,13 L23,11 L23,14.5 L17,29 L12.5,29.5 L18.5,15.5 L10,16.5Z" fill="#d81818"/></svg><span class="t" style="left:48px;letter-spacing:0.275px">Datas de Contrato</span></div>
<div class="mi" style="top:729.00px"><svg class="a" style="left:2px;top:10.5px;width:36px;height:36px;overflow:visible" viewBox="0 0 36 36"><path d="M13,3.5 L35,2.9 L35,24 L13,25Z" fill="#a0a0a0"/><path d="M13,3.5 L35,2.9 L35,7 L13,8Z" fill="#cfcfcf"/><path d="M0,12 L14,10 L15,30 L0,31Z" fill="#2a7ae0"/><path d="M1,13 L13,11.5 L13,18.5 L1,20Z" fill="#7ab8f0"/><rect x="1" y="23.5" width="12" height="2.5" fill="#1a3a80"/><path d="M14,22 L35,20 L35,26 L14,29Z" fill="#2a7ae0"/><circle cx="20" cy="29.5" r="3" fill="#333"/><circle cx="31" cy="28" r="3" fill="#333"/><circle cx="20" cy="29.5" r="1.2" fill="#ccc"/><circle cx="31" cy="28" r="1.2" fill="#ccc"/></svg><span class="t" style="left:48px;letter-spacing:-0.011px">Fornecedor</span></div>
<div class="mi" style="top:777.60px"><svg class="a" style="left:2px;top:10.5px;width:36px;height:36px;overflow:visible" viewBox="0 0 36 36"><g transform="translate(20,-2.4) scale(0.62)"><path d="M-15.5,34.5 C-15.5,24 -10,20 -4,19 L4,19 C10,20 15.5,24 15.5,34.5 Z" fill="#a8a8a8"/><path d="M-15.5,34.5 C-15.5,28 -13,25 -10,23 L-8,34.5Z" fill="#8f96b8" opacity="0.5"/><path d="M-1.8,19 L1.8,19 L2.5,31 L0,34.5 L-2.5,31Z" fill="#888"/><ellipse cx="0" cy="10.5" rx="7.4" ry="9" fill="#e4e4e4"/><path d="M-8,11 C-9.5,1 -3,-1 1,-0.5 C6,0 9,3 7.8,10 C6.5,5 3,4.5 -1,5.5 C-4,6.5 -6.5,8 -8,11Z" fill="#6a6a6a"/></g><g transform="translate(29,2) scale(0.64)"><path d="M-13,34 C-13,25 -8,21 -3,20 L3,20 C8,21 13,25 13,34 Z" fill="#3a3a3a"/><path d="M-8.5,12 C-9,2 -4,-1 0,-1 C4,-1 9,2 8.5,12 C8.5,17 9,20 6,21 L-6,21 C-9,20 -8.5,17 -8.5,12Z" fill="#4a4a4a"/><ellipse cx="0" cy="11" rx="5.8" ry="7.5" fill="#ececec"/><path d="M-6,8 C-5,3 -2,2 1,2.5 C4,3 6,5 6,9 C4,6 1,5 -2,5.5Z" fill="#4a4a4a"/></g><g transform="translate(9,12) scale(0.7)"><path d="M-15.5,34.5 C-15.5,24 -10,20 -4,19 L4,19 C10,20 15.5,24 15.5,34.5 Z" fill="#b8bdd6"/><path d="M-15.5,34.5 C-15.5,28 -13,25 -10,23 L-8,34.5Z" fill="#8f96b8" opacity="0.5"/><path d="M-1.8,19 L1.8,19 L2.5,31 L0,34.5 L-2.5,31Z" fill="#e04a4a"/><ellipse cx="0" cy="10.5" rx="7.4" ry="9" fill="#f7c795"/><path d="M-8,11 C-9.5,1 -3,-1 1,-0.5 C6,0 9,3 7.8,10 C6.5,5 3,4.5 -1,5.5 C-4,6.5 -6.5,8 -8,11Z" fill="#a86a1c"/></g><g transform="translate(19,15) scale(0.64)"><path d="M-13,34 C-13,25 -8,21 -3,20 L3,20 C8,21 13,25 13,34 Z" fill="#222"/><path d="M-8.5,12 C-9,2 -4,-1 0,-1 C4,-1 9,2 8.5,12 C8.5,17 9,20 6,21 L-6,21 C-9,20 -8.5,17 -8.5,12Z" fill="#b07020"/><ellipse cx="0" cy="11" rx="5.8" ry="7.5" fill="#f7c795"/><path d="M-6,8 C-5,3 -2,2 1,2.5 C4,3 6,5 6,9 C4,6 1,5 -2,5.5Z" fill="#b07020"/></g></svg><span class="t" style="left:48px;letter-spacing:0.393px">Tipo Dependente</span></div>
<div class="mi" style="top:826.20px"><svg class="a" style="left:2px;top:10.5px;width:36px;height:36px;overflow:visible" viewBox="0 0 36 36"><defs><radialGradient id="scg" cx="0.45" cy="0.45" r="0.6"><stop offset="0" stop-color="#ffffff"/><stop offset="0.65" stop-color="#f4f6f6"/><stop offset="1" stop-color="#d8e4e6"/></radialGradient><linearGradient id="ssg" x1="0" y1="0" x2="0" y2="1"><stop offset="0" stop-color="#2f8e98"/><stop offset="0.5" stop-color="#3f9aa6"/><stop offset="1" stop-color="#6ab8c0"/></linearGradient></defs><circle cx="18.3" cy="18" r="17.1" fill="url(#scg)" stroke="#94c6cc" stroke-width="1.3"/><path d="M42,6 C28,8 20,20 23,32 C26,44 40,52 48,60 C54,66 52,76 43,81 C58,82 70,72 66,58 C62,46 48,38 40,30 C34,24 34,12 42,6 Z" fill="url(#ssg)" transform="translate(2.60,1.80) scale(0.3811)"/></svg><span class="t" style="left:48px;letter-spacing:-0.200px">Consultar CBO</span></div>
</div>

<!-- logo -->
<div class="a" style="left:36px;top:9px;width:101px;height:101px;border-radius:16px;background:#abb314"></div>
<div class="a" style="left:41.4px;top:14.5px;width:90px;height:90px;border-radius:12px;background:radial-gradient(ellipse at 62% 50%,#ffffff 0,#fdfdfd 40%,#e6e6e6 85%,#d4d4d4 100%)"></div>
<svg class="a" style="left:41.4px;top:14.5px;width:90px;height:90px" viewBox="0 0 90 90"><defs><filter id="lgb" x="-20%" y="-20%" width="140%" height="140%"><feGaussianBlur stdDeviation="1.2"/></filter></defs><g filter="url(#lgb)" stroke="#e0e0e0" stroke-width="5" fill="none" stroke-linecap="round"><path d="M45,7 C39,14 40,24 47,31 C51,35 55,38 59,42"/><path d="M29,45 C36,50 42,54 44,60 C47,67 46,74 41,80"/></g><path d="M42,6 C28,8 20,20 23,32 C26,44 40,52 48,60 C54,66 52,76 43,81 C58,82 70,72 66,58 C62,46 48,38 40,30 C34,24 34,12 42,6 Z" fill="#52a9b2"/></svg>
</body></html>
